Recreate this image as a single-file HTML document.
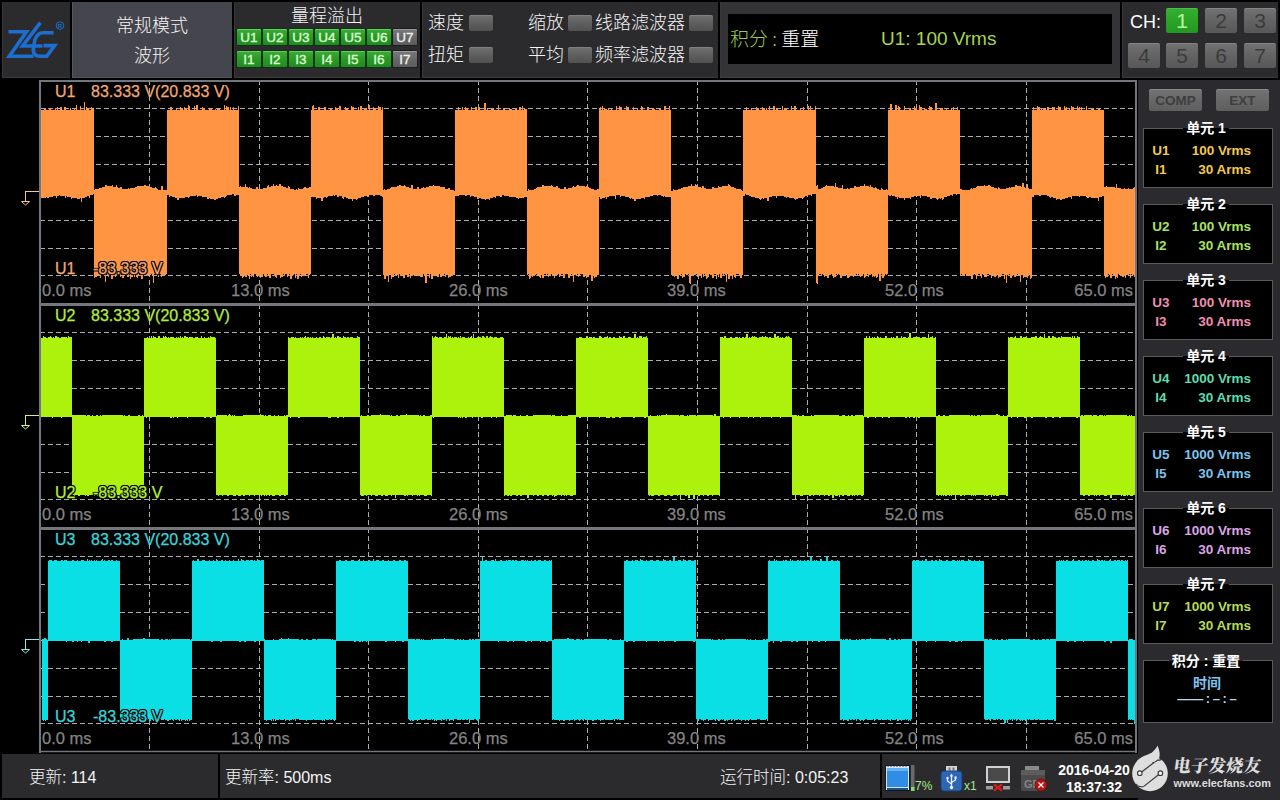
<!DOCTYPE html>
<html lang="zh"><head><meta charset="utf-8"><title>波形</title>
<style>
html,body{margin:0;padding:0;background:#000;}
body{width:1280px;height:800px;overflow:hidden;font-family:"Liberation Sans","Noto Sans CJK SC",sans-serif;color:#fff;}
#scr{position:relative;width:1280px;height:800px;background:#000;overflow:hidden;}
#scr div,#scr span{box-sizing:border-box;}
.abs{position:absolute;}
.pn{position:absolute;top:2px;height:76px;background:#2b2b2e;border-bottom:1px solid #3c3c40;box-shadow:inset 1px 0 0 #38383c;}
.cj{font-family:"Noto Sans CJK SC","Liberation Sans",sans-serif;font-weight:300;}
.t18{position:absolute;font-size:18px;line-height:24px;white-space:nowrap;color:#f4f4f4;}
.ctr{text-align:center;}
.ob{position:absolute;width:24px;height:16px;border-radius:1px;font-size:13.5px;font-weight:normal;-webkit-text-stroke:0.35px #d9ffd0;line-height:16px;padding-top:1px;text-align:center;color:#d9ffd0;background:linear-gradient(#3cab38,#2a9a27 50%,#218a21);box-shadow:inset 0 1px 0 rgba(200,255,200,.35),0 0 0 1px #0d3410;}
.ob.g{background:linear-gradient(#7a7a7a,#666 55%,#5c5c5c);color:#f0f0f0;-webkit-text-stroke-color:#f0f0f0;box-shadow:inset 0 1px 0 rgba(255,255,255,.25),0 0 0 1px #1c1c1c;}
.ind{position:absolute;width:24px;height:16px;border-radius:2px;background:linear-gradient(#707070,#5c5c5c 60%,#525252);box-shadow:inset 0 1px 0 rgba(255,255,255,.12);}
.chb{position:absolute;width:32px;height:25px;border-radius:2px;font-size:21px;line-height:25px;text-align:center;color:#3b3b3b;background:linear-gradient(#727272,#626262 55%,#585858);box-shadow:inset 0 1px 0 rgba(255,255,255,.14);}
.chb.on{background:linear-gradient(#35b030,#2aa227 55%,#239821);color:#b8ffa8;}
#plots{position:absolute;left:0;top:0;}
.pl{position:absolute;font-size:16px;line-height:20px;white-space:nowrap;-webkit-text-stroke:0.25px currentColor;}
.ol{text-shadow:-1px 0 #000,1px 0 #000,0 -1px #000,0 1px #000,-1px -1px #000,1px 1px #000,-1px 1px #000,1px -1px #000;}
.tl{position:absolute;font-size:16.5px;line-height:20px;color:#848484;white-space:nowrap;-webkit-text-stroke:0.25px #848484;}
#rp{position:absolute;left:1138px;top:80px;width:142px;height:720px;background:#2b2b2f;}
.rb{position:absolute;width:53px;height:22px;border-radius:2px;font-size:13.5px;line-height:22px;padding-top:1px;text-align:center;font-weight:bold;color:#3e3e3e;background:linear-gradient(#747474,#676767 55%,#5e5e5e);box-shadow:inset 0 1px 0 rgba(255,255,255,.16);}
.ub{position:absolute;left:5px;width:130px;height:60px;background:#000;border:1px solid #5a5a5e;}
.ut{position:absolute;left:3px;width:130px;height:16px;text-align:center;font-size:14px;line-height:16px;font-weight:bold;color:#fff;white-space:nowrap;font-family:"Liberation Sans","Noto Sans CJK SC",sans-serif;}
.ut span{background:linear-gradient(#2b2b2f 50%,#000 50%);padding:0 3px;display:inline-block;height:16px;}
.ul{position:absolute;font-size:13.5px;line-height:16px;font-weight:bold;white-space:nowrap;}
.st{position:absolute;top:754px;height:44px;background:#2b2b2e;}
.stt{position:absolute;font-size:16.5px;line-height:22px;white-space:nowrap;color:#f4f4f4;font-family:"Liberation Sans","Noto Sans CJK SC",sans-serif;font-weight:300;}
.la{font-size:16px;}

</style></head>
<body>
<div id="scr">
<!-- top bar -->
<div class="pn" style="left:2px;width:68px;">
<svg class="abs" style="left:0;top:0" width="68" height="76" viewBox="2 2 68 76">
<g fill="none" stroke="#1c6fd0" stroke-width="3.6" stroke-linejoin="miter">
<path d="M8.5,31.7 H26.5 L9.3,56.3 H33.5"/>
<path d="M40.4,22.6 L22.6,46 H42.5"/>
<path d="M53.5,32.7 H43 Q37.5,32.7 35,39.5 L33.6,46.5 Q31.8,56.3 40,56.3 H46.8 L54.6,45.6 H43.5"/>
</g>
<circle cx="60" cy="25.6" r="3.8" fill="none" stroke="#1c6fd0" stroke-width="1"/>
<text x="60" y="27.8" font-size="6" font-weight="bold" fill="#1c6fd0" text-anchor="middle" font-family="Liberation Sans,sans-serif">R</text>
</svg>
</div>
<div class="pn" style="left:72px;width:160px;background:#45454d;border-bottom-color:#52525a;box-shadow:inset 1px 0 0 #56565e;">
<div class="t18 cj ctr" style="left:0;width:160px;top:10px;">常规模式</div>
<div class="t18 cj ctr" style="left:0;width:160px;top:40px;">波形</div>
</div>
<div class="pn" style="left:234px;width:186px;">
<div class="t18 cj ctr" style="left:0;width:186px;top:0px;">量程溢出</div>
<div class="ob" style="left:3px;top:27px">U1</div><div class="ob" style="left:29px;top:27px">U2</div><div class="ob" style="left:55px;top:27px">U3</div><div class="ob" style="left:81px;top:27px">U4</div><div class="ob" style="left:107px;top:27px">U5</div><div class="ob" style="left:133px;top:27px">U6</div><div class="ob g" style="left:159px;top:27px">U7</div>
<div class="ob" style="left:3px;top:49px">I1</div><div class="ob" style="left:29px;top:49px">I2</div><div class="ob" style="left:55px;top:49px">I3</div><div class="ob" style="left:81px;top:49px">I4</div><div class="ob" style="left:107px;top:49px">I5</div><div class="ob" style="left:133px;top:49px">I6</div><div class="ob g" style="left:159px;top:49px">I7</div>
</div>
<div class="pn" style="left:422px;width:296px;">
<div class="t18 cj" style="left:6px;top:7px;">速度</div><div class="ind" style="left:47px;top:13px"></div>
<div class="t18 cj" style="left:6px;top:39px;">扭矩</div><div class="ind" style="left:47px;top:45px"></div>
<div class="t18 cj" style="left:106px;top:7px;">缩放</div><div class="ind" style="left:146px;top:13px"></div>
<div class="t18 cj" style="left:106px;top:39px;">平均</div><div class="ind" style="left:146px;top:45px"></div>
<div class="t18 cj" style="left:173px;top:7px;">线路滤波器</div><div class="ind" style="left:267px;top:13px"></div>
<div class="t18 cj" style="left:173px;top:39px;">频率滤波器</div><div class="ind" style="left:267px;top:45px"></div>
</div>
<div class="pn" style="left:720px;width:400px;background:#343437;border-bottom-color:#404044;">
<div class="abs" style="left:8px;top:12px;width:384px;height:50px;background:#000;"></div>
<div class="t18 cj" style="left:10px;top:24px;font-size:19px;color:#9ccc4e;">积分&nbsp;:&nbsp;<span style="color:#fff">重置</span></div>
<div class="t18" style="left:161px;top:25px;color:#a6d64e;font-size:19px;">U1: 100 Vrms</div>
</div>
<div class="pn" style="left:1122px;width:156px;">
<div class="t18" style="left:8px;top:8px;font-size:18px;color:#fff;">CH:</div>
<div class="chb on" style="left:44px;top:6px">1</div><div class="chb" style="left:83px;top:6px">2</div><div class="chb" style="left:122px;top:6px">3</div>
<div class="chb" style="left:6px;top:41px">4</div><div class="chb" style="left:44px;top:41px">5</div><div class="chb" style="left:83px;top:41px">6</div><div class="chb" style="left:122px;top:41px">7</div>
</div>
<svg id="plots" width="1280" height="800" viewBox="0 0 1280 800" shape-rendering="crispEdges">
<rect x="39" y="80" width="1098" height="673" fill="#000"/>
<line x1="40" x2="1135" y1="108.5" y2="108.5" stroke="#acacac" stroke-width="1" stroke-dasharray="5 3"/>
<line x1="40" x2="1135" y1="136.5" y2="136.5" stroke="#acacac" stroke-width="1" stroke-dasharray="5 3"/>
<line x1="40" x2="1135" y1="164.5" y2="164.5" stroke="#acacac" stroke-width="1" stroke-dasharray="5 3"/>
<line x1="40" x2="1135" y1="192.5" y2="192.5" stroke="#acacac" stroke-width="1" stroke-dasharray="5 3"/>
<line x1="40" x2="1135" y1="220.5" y2="220.5" stroke="#acacac" stroke-width="1" stroke-dasharray="5 3"/>
<line x1="40" x2="1135" y1="248.5" y2="248.5" stroke="#acacac" stroke-width="1" stroke-dasharray="5 3"/>
<line x1="40" x2="1135" y1="275.5" y2="275.5" stroke="#acacac" stroke-width="1" stroke-dasharray="5 3"/>
<line x1="149.5" x2="149.5" y1="82" y2="303" stroke="#acacac" stroke-width="1" stroke-dasharray="5 3" stroke-dashoffset="2"/>
<line x1="259.5" x2="259.5" y1="82" y2="303" stroke="#acacac" stroke-width="1" stroke-dasharray="5 3" stroke-dashoffset="2"/>
<line x1="368.5" x2="368.5" y1="82" y2="303" stroke="#acacac" stroke-width="1" stroke-dasharray="5 3" stroke-dashoffset="2"/>
<line x1="478.5" x2="478.5" y1="82" y2="303" stroke="#acacac" stroke-width="1" stroke-dasharray="5 3" stroke-dashoffset="2"/>
<line x1="587.5" x2="587.5" y1="82" y2="303" stroke="#acacac" stroke-width="1" stroke-dasharray="5 3" stroke-dashoffset="2"/>
<line x1="697.5" x2="697.5" y1="82" y2="303" stroke="#acacac" stroke-width="1" stroke-dasharray="5 3" stroke-dashoffset="2"/>
<line x1="807.5" x2="807.5" y1="82" y2="303" stroke="#acacac" stroke-width="1" stroke-dasharray="5 3" stroke-dashoffset="2"/>
<line x1="916.5" x2="916.5" y1="82" y2="303" stroke="#acacac" stroke-width="1" stroke-dasharray="5 3" stroke-dashoffset="2"/>
<line x1="1026.5" x2="1026.5" y1="82" y2="303" stroke="#acacac" stroke-width="1" stroke-dasharray="5 3" stroke-dashoffset="2"/>
<line x1="40" x2="1135" y1="332.5" y2="332.5" stroke="#acacac" stroke-width="1" stroke-dasharray="5 3"/>
<line x1="40" x2="1135" y1="360.5" y2="360.5" stroke="#acacac" stroke-width="1" stroke-dasharray="5 3"/>
<line x1="40" x2="1135" y1="388.5" y2="388.5" stroke="#acacac" stroke-width="1" stroke-dasharray="5 3"/>
<line x1="40" x2="1135" y1="416.5" y2="416.5" stroke="#acacac" stroke-width="1" stroke-dasharray="5 3"/>
<line x1="40" x2="1135" y1="444.5" y2="444.5" stroke="#acacac" stroke-width="1" stroke-dasharray="5 3"/>
<line x1="40" x2="1135" y1="472.5" y2="472.5" stroke="#acacac" stroke-width="1" stroke-dasharray="5 3"/>
<line x1="40" x2="1135" y1="499.5" y2="499.5" stroke="#acacac" stroke-width="1" stroke-dasharray="5 3"/>
<line x1="149.5" x2="149.5" y1="306" y2="527" stroke="#acacac" stroke-width="1" stroke-dasharray="5 3" stroke-dashoffset="2"/>
<line x1="259.5" x2="259.5" y1="306" y2="527" stroke="#acacac" stroke-width="1" stroke-dasharray="5 3" stroke-dashoffset="2"/>
<line x1="368.5" x2="368.5" y1="306" y2="527" stroke="#acacac" stroke-width="1" stroke-dasharray="5 3" stroke-dashoffset="2"/>
<line x1="478.5" x2="478.5" y1="306" y2="527" stroke="#acacac" stroke-width="1" stroke-dasharray="5 3" stroke-dashoffset="2"/>
<line x1="587.5" x2="587.5" y1="306" y2="527" stroke="#acacac" stroke-width="1" stroke-dasharray="5 3" stroke-dashoffset="2"/>
<line x1="697.5" x2="697.5" y1="306" y2="527" stroke="#acacac" stroke-width="1" stroke-dasharray="5 3" stroke-dashoffset="2"/>
<line x1="807.5" x2="807.5" y1="306" y2="527" stroke="#acacac" stroke-width="1" stroke-dasharray="5 3" stroke-dashoffset="2"/>
<line x1="916.5" x2="916.5" y1="306" y2="527" stroke="#acacac" stroke-width="1" stroke-dasharray="5 3" stroke-dashoffset="2"/>
<line x1="1026.5" x2="1026.5" y1="306" y2="527" stroke="#acacac" stroke-width="1" stroke-dasharray="5 3" stroke-dashoffset="2"/>
<line x1="40" x2="1135" y1="556.5" y2="556.5" stroke="#acacac" stroke-width="1" stroke-dasharray="5 3"/>
<line x1="40" x2="1135" y1="584.5" y2="584.5" stroke="#acacac" stroke-width="1" stroke-dasharray="5 3"/>
<line x1="40" x2="1135" y1="612.5" y2="612.5" stroke="#acacac" stroke-width="1" stroke-dasharray="5 3"/>
<line x1="40" x2="1135" y1="640.5" y2="640.5" stroke="#acacac" stroke-width="1" stroke-dasharray="5 3"/>
<line x1="40" x2="1135" y1="668.5" y2="668.5" stroke="#acacac" stroke-width="1" stroke-dasharray="5 3"/>
<line x1="40" x2="1135" y1="696.5" y2="696.5" stroke="#acacac" stroke-width="1" stroke-dasharray="5 3"/>
<line x1="40" x2="1135" y1="723.5" y2="723.5" stroke="#acacac" stroke-width="1" stroke-dasharray="5 3"/>
<line x1="149.5" x2="149.5" y1="530" y2="751" stroke="#acacac" stroke-width="1" stroke-dasharray="5 3" stroke-dashoffset="2"/>
<line x1="259.5" x2="259.5" y1="530" y2="751" stroke="#acacac" stroke-width="1" stroke-dasharray="5 3" stroke-dashoffset="2"/>
<line x1="368.5" x2="368.5" y1="530" y2="751" stroke="#acacac" stroke-width="1" stroke-dasharray="5 3" stroke-dashoffset="2"/>
<line x1="478.5" x2="478.5" y1="530" y2="751" stroke="#acacac" stroke-width="1" stroke-dasharray="5 3" stroke-dashoffset="2"/>
<line x1="587.5" x2="587.5" y1="530" y2="751" stroke="#acacac" stroke-width="1" stroke-dasharray="5 3" stroke-dashoffset="2"/>
<line x1="697.5" x2="697.5" y1="530" y2="751" stroke="#acacac" stroke-width="1" stroke-dasharray="5 3" stroke-dashoffset="2"/>
<line x1="807.5" x2="807.5" y1="530" y2="751" stroke="#acacac" stroke-width="1" stroke-dasharray="5 3" stroke-dashoffset="2"/>
<line x1="916.5" x2="916.5" y1="530" y2="751" stroke="#acacac" stroke-width="1" stroke-dasharray="5 3" stroke-dashoffset="2"/>
<line x1="1026.5" x2="1026.5" y1="530" y2="751" stroke="#acacac" stroke-width="1" stroke-dasharray="5 3" stroke-dashoffset="2"/>
<path d="M41,109.5 44,109.5 44,108 46,108 46,110 47,110 47,109.5 49,109.5 49,107.5 50,107.5 50,108 51,108 51,110 53,110 53,109.5 55,109.5 55,108 56,108 56,109.5 57,109.5 57,106.5 58,106.5 58,109.5 60,109.5 60,107 62,107 62,109.5 63,109.5 63,110 64,110 64,106.5 66,106.5 66,110 67,110 67,109.5 70,109.5 70,108 71,108 71,109.5 74,109.5 74,107.5 75,107.5 75,110 76,110 76,105 77,105 77,109.5 80,109.5 80,106 81,106 81,110 84,110 84,101.5 85,101.5 85,110 86,110 86,107 87,107 87,108 88,108 88,107.5 89,107.5 89,109.5 90,109.5 90,110 91,110 91,107 92,107 92,107.5 94,107.5 94,194 93,194 93,194.5 92,194.5 92,195 90,195 90,198 89,198 89,195.5 88,195.5 88,196 87,196 87,196.5 86,196.5 86,197 85,197 85,197.5 84,197.5 84,198 82,198 82,201.5 81,201.5 81,198 80,198 80,198.5 77,198.5 77,198 74,198 74,197.5 72,197.5 72,199 71,199 71,197 69,197 69,196.5 67,196.5 67,196 66,196 66,197.5 65,197.5 65,195.5 60,195.5 60,195 59,195 59,195.5 57,195.5 57,197.5 56,197.5 56,195.5 55,195.5 55,196 53,196 53,196.5 51,196.5 51,197 49,197 49,197.5 48,197.5 48,198 47,198 47,197 46,197 46,197.5 43,197.5 43,198 42,198 42,197.5 41,197.5ZM94,189.5 95,189.5 95,188.5 96,188.5 96,189 98,189 98,188.5 99,188.5 99,188 101,188 101,187.5 102,187.5 102,187 104,187 104,186.5 105,186.5 105,184.5 107,184.5 107,186 109,186 109,185.5 110,185.5 110,186 112,186 112,185 113,185 113,186.5 115,186.5 115,187 116,187 116,185 117,185 117,187 118,187 118,187.5 119,187.5 119,188 120,188 120,186.5 121,186.5 121,187 122,187 122,188.5 127,188.5 127,189 128,189 128,187.5 129,187.5 129,188.5 130,188.5 130,188 133,188 133,187.5 135,187.5 135,187 136,187 136,186.5 137,186.5 137,186 138,186 138,185.5 139,185.5 139,186 141,186 141,185.5 144,185.5 144,184.5 145,184.5 145,185 146,185 146,186 149,186 149,186.5 150,186.5 150,187 152,187 152,187.5 154,187.5 154,188 155,188 155,187 156,187 156,187.5 157,187.5 157,189 158,189 158,189.5 160,189.5 160,190 161,190 161,186 163,186 163,190 167,190 167,274 166,274 166,274.5 163,274.5 163,276 162,276 162,276.5 161,276.5 161,274 159,274 159,276.5 158,276.5 158,274.5 156,274.5 156,274 154,274 154,283 153,283 153,274.5 152,274.5 152,274 151,274 151,274.5 150,274.5 150,274 149,274 149,275.5 148,275.5 148,276 146,276 146,274.5 144,274.5 144,274 143,274 143,278.5 142,278.5 142,279 141,279 141,274.5 140,274.5 140,274 139,274 139,274.5 138,274.5 138,277.5 137,277.5 137,277 136,277 136,274 135,274 135,277 134,277 134,274 133,274 133,277 131,277 131,278.5 130,278.5 130,274 129,274 129,276.5 127,276.5 127,274.5 124,274.5 124,277.5 122,277.5 122,274 121,274 121,277 120,277 120,274.5 119,274.5 119,274 118,274 118,274.5 116,274.5 116,277 115,277 115,274 113,274 113,278.5 111,278.5 111,274.5 109,274.5 109,276.5 108,276.5 108,274.5 107,274.5 107,274 106,274 106,281.5 105,281.5 105,274 104,274 104,274.5 101,274.5 101,278 100,278 100,274.5 97,274.5 97,276.5 95,276.5 95,277.5 94,277.5ZM167,110 170,110 170,107 171,107 171,106.5 172,106.5 172,109.5 173,109.5 173,110 174,110 174,109.5 175,109.5 175,110 176,110 176,108 177,108 177,110 178,110 178,109.5 179,109.5 179,110 180,110 180,106.5 181,106.5 181,107.5 183,107.5 183,110 184,110 184,107 185,107 185,107.5 186,107.5 186,108 187,108 187,110 188,110 188,105 189,105 189,105.5 190,105.5 190,110 191,110 191,109.5 192,109.5 192,110 194,110 194,105.5 195,105.5 195,109.5 196,109.5 196,105 198,105 198,109.5 199,109.5 199,110 200,110 200,109.5 201,109.5 201,110 202,110 202,107 203,107 203,108 205,108 205,109.5 206,109.5 206,110 207,110 207,109.5 208,109.5 208,110 209,110 209,107.5 210,107.5 210,108 212,108 212,109.5 213,109.5 213,110 215,110 215,108.5 216,108.5 216,109.5 217,109.5 217,108 218,108 218,108.5 219,108.5 219,108 220,108 220,109.5 222,109.5 222,110 224,110 224,105 225,105 225,110 226,110 226,105.5 227,105.5 227,106.5 228,106.5 228,107 229,107 229,110 230,110 230,107 231,107 231,109.5 232,109.5 232,110 233,110 233,107 234,107 234,110 235,110 235,109.5 236,109.5 236,110 238,110 238,105.5 239,105.5 239,194.5 236,194.5 236,195.5 234,195.5 234,194 232,194 232,194.5 228,194.5 228,195 227,195 227,195.5 226,195.5 226,197 225,197 225,197.5 224,197.5 224,196.5 223,196.5 223,197 221,197 221,197.5 220,197.5 220,198 218,198 218,198.5 216,198.5 216,199.5 215,199.5 215,200 214,200 214,199 213,199 213,198.5 210,198.5 210,198 209,198 209,199 208,199 208,198.5 207,198.5 207,197 205,197 205,196.5 202,196.5 202,196 201,196 201,195.5 198,195.5 198,197 197,197 197,195 196,195 196,195.5 192,195.5 192,196 190,196 190,196.5 189,196.5 189,197.5 188,197.5 188,196.5 187,196.5 187,197 185,197 185,197.5 182,197.5 182,198 179,198 179,199.5 177,199.5 177,197.5 175,197.5 175,197 173,197 173,196.5 172,196.5 172,196 170,196 170,197 169,197 169,195 168,195 168,194.5 167,194.5ZM239,187 240,187 240,186 241,186 241,187 242,187 242,186.5 243,186.5 243,187 244,187 244,186.5 245,186.5 245,184 246,184 246,187 248,187 248,187.5 249,187.5 249,187 250,187 250,188 252,188 252,188.5 254,188.5 254,189 255,189 255,188.5 256,188.5 256,187 258,187 258,189 261,189 261,188.5 263,188.5 263,188 266,188 266,187.5 267,187.5 267,185.5 268,185.5 268,185 269,185 269,186.5 271,186.5 271,186 273,186 273,184 274,184 274,185.5 276,185.5 276,185 277,185 277,185.5 279,185.5 279,184 281,184 281,185.5 282,185.5 282,186 283,186 283,186.5 285,186.5 285,187 286,187 286,187.5 288,187.5 288,186 289,186 289,186.5 290,186.5 290,188.5 292,188.5 292,189 294,189 294,189.5 296,189.5 296,189 297,189 297,189.5 298,189.5 298,188 299,188 299,189 302,189 302,188.5 303,188.5 303,188 304,188 304,187 306,187 306,187.5 309,187.5 309,187 311,187 311,274 310,274 310,274.5 309,274.5 309,278 308,278 308,274 306,274 306,274.5 304,274.5 304,276 302,276 302,277 301,277 301,274 300,274 300,274.5 299,274.5 299,278.5 297,278.5 297,274 296,274 296,277.5 295,277.5 295,274 294,274 294,274.5 292,274.5 292,278.5 291,278.5 291,279 290,279 290,274 289,274 289,274.5 288,274.5 288,277 287,277 287,274 285,274 285,274.5 284,274.5 284,274 283,274 283,276.5 281,276.5 281,277.5 280,277.5 280,274.5 277,274.5 277,277.5 276,277.5 276,277 275,277 275,274.5 274,274.5 274,274 271,274 271,277.5 269,277.5 269,274.5 268,274.5 268,274 267,274 267,276.5 265,276.5 265,274.5 264,274.5 264,274 263,274 263,276.5 261,276.5 261,277.5 260,277.5 260,274 259,274 259,274.5 258,274.5 258,276.5 257,276.5 257,274.5 256,274.5 256,274 254,274 254,276.5 253,276.5 253,276 252,276 252,277 251,277 251,274 250,274 250,278.5 249,278.5 249,274.5 247,274.5 247,277 246,277 246,276.5 245,276.5 245,274.5 244,274.5 244,277 243,277 243,277.5 242,277.5 242,274.5 240,274.5 240,274 239,274ZM311,110 312,110 312,105.5 313,105.5 313,105 314,105 314,110 315,110 315,109.5 316,109.5 316,110 318,110 318,107 320,107 320,109.5 321,109.5 321,110 322,110 322,109.5 324,109.5 324,106.5 326,106.5 326,109.5 327,109.5 327,110 328,110 328,109.5 330,109.5 330,108 332,108 332,109.5 333,109.5 333,110 335,110 335,106.5 336,106.5 336,107.5 338,107.5 338,109.5 339,109.5 339,105.5 341,105.5 341,109.5 343,109.5 343,110 344,110 344,109.5 345,109.5 345,107 346,107 346,107.5 348,107.5 348,110 350,110 350,109.5 351,109.5 351,106 352,106 352,106.5 353,106.5 353,107 354,107 354,109.5 355,109.5 355,110 357,110 357,109.5 358,109.5 358,106.5 359,106.5 359,109.5 360,109.5 360,106 362,106 362,109.5 364,109.5 364,107.5 365,107.5 365,108 367,108 367,109.5 369,109.5 369,105 370,105 370,109.5 371,109.5 371,110 373,110 373,107 374,107 374,107.5 375,107.5 375,108 376,108 376,110 378,110 378,106 379,106 379,107 381,107 381,110 382,110 382,106.5 383,106.5 383,197 382,197 382,195.5 380,195.5 380,195 377,195 377,194.5 376,194.5 376,195 375,195 375,195.5 374,195.5 374,196 373,196 373,194.5 371,194.5 371,195 370,195 370,194.5 369,194.5 369,196.5 368,196.5 368,197 367,197 367,195.5 366,195.5 366,196 364,196 364,196.5 363,196.5 363,197 361,197 361,197.5 359,197.5 359,198 358,198 358,199 357,199 357,199.5 356,199.5 356,198.5 354,198.5 354,199 353,199 353,200.5 352,200.5 352,198.5 348,198.5 348,198 346,198 346,197 344,197 344,198.5 343,198.5 343,197.5 342,197.5 342,196 339,196 339,197 338,197 338,196.5 337,196.5 337,195 335,195 335,195.5 334,195.5 334,195 333,195 333,195.5 329,195.5 329,196 328,196 328,197 327,197 327,197.5 326,197.5 326,196.5 325,196.5 325,197 324,197 324,197.5 323,197.5 323,200.5 321,200.5 321,197.5 317,197.5 317,198.5 316,198.5 316,197 313,197 313,196.5 312,196.5 312,197 311,197ZM383,190 384,190 384,188.5 385,188.5 385,190 386,190 386,189.5 387,189.5 387,189 389,189 389,188.5 390,188.5 390,188 391,188 391,187 392,187 392,186.5 393,186.5 393,187 395,187 395,186.5 397,186.5 397,186 399,186 399,184.5 401,184.5 401,186 404,186 404,184.5 405,184.5 405,186 406,186 406,186.5 408,186.5 408,187 409,187 409,187.5 411,187.5 411,184.5 413,184.5 413,188.5 417,188.5 417,187 419,187 419,188.5 421,188.5 421,188 422,188 422,187.5 423,187.5 423,187 424,187 424,187.5 426,187.5 426,187 428,187 428,186.5 429,186.5 429,186 432,186 432,185.5 433,185.5 433,184.5 434,184.5 434,185.5 436,185.5 436,186 440,186 440,186.5 441,186.5 441,187 443,187 443,186.5 444,186.5 444,187 445,187 445,188.5 447,188.5 447,189 448,189 448,187.5 450,187.5 450,190 454,190 454,190.5 455,190.5 455,274.5 451,274.5 451,277 450,277 450,276.5 449,276.5 449,278 448,278 448,274.5 446,274.5 446,276.5 445,276.5 445,274 444,274 444,276 443,276 443,274.5 442,274.5 442,277 440,277 440,274 439,274 439,276.5 438,276.5 438,277 437,277 437,274.5 433,274.5 433,278.5 431,278.5 431,274 430,274 430,278 429,278 429,274 427,274 427,283 426,283 426,282.5 425,282.5 425,274.5 424,274.5 424,274 423,274 423,276.5 421,276.5 421,277 420,277 420,274.5 417,274.5 417,275.5 415,275.5 415,276 414,276 414,274.5 411,274.5 411,277.5 410,277.5 410,274 409,274 409,276.5 407,276.5 407,274.5 405,274.5 405,277.5 403,277.5 403,274.5 400,274.5 400,274 399,274 399,277.5 398,277.5 398,274.5 395,274.5 395,274 394,274 394,277 392,277 392,278.5 391,278.5 391,274.5 389,274.5 389,282 388,282 388,274.5 386,274.5 386,278.5 384,278.5 384,274.5 383,274.5ZM455,109.5 457,109.5 457,110 458,110 458,107 459,107 459,109.5 461,109.5 461,110 462,110 462,107 463,107 463,109.5 465,109.5 465,107 466,107 466,108 468,108 468,110 469,110 469,109.5 470,109.5 470,110 471,110 471,107 472,107 472,110 474,110 474,109.5 475,109.5 475,107 477,107 477,109.5 478,109.5 478,106.5 480,106.5 480,109.5 482,109.5 482,110 484,110 484,103 485,103 485,102.5 486,102.5 486,110 487,110 487,108 488,108 488,110 489,110 489,109.5 490,109.5 490,110 491,110 491,108 492,108 492,108.5 493,108.5 493,108 494,108 494,109.5 498,109.5 498,105 499,105 499,109.5 501,109.5 501,110 503,110 503,108 505,108 505,110 507,110 507,109.5 509,109.5 509,107.5 510,107.5 510,108.5 512,108.5 512,109.5 514,109.5 514,110 515,110 515,107.5 517,107.5 517,110 518,110 518,109.5 519,109.5 519,106.5 521,106.5 521,110 522,110 522,105.5 523,105.5 523,109.5 524,109.5 524,108 525,108 525,108.5 527,108.5 527,196.5 525,196.5 525,197 524,197 524,197.5 520,197.5 520,198 519,198 519,198.5 518,198.5 518,197.5 516,197.5 516,197 513,197 513,196.5 511,196.5 511,197 510,197 510,196.5 509,196.5 509,195.5 504,195.5 504,195 502,195 502,196.5 500,196.5 500,195.5 498,195.5 498,196 496,196 496,198 495,198 495,197 493,197 493,197.5 491,197.5 491,198 490,198 490,199.5 489,199.5 489,198.5 486,198.5 486,200 485,200 485,198.5 481,198.5 481,198 479,198 479,199 478,199 478,198.5 477,198.5 477,197 476,197 476,196.5 474,196.5 474,196 472,196 472,195.5 471,195.5 471,197 470,197 470,195 468,195 468,194.5 467,194.5 467,196 465,196 465,194.5 461,194.5 461,195 459,195 459,196 455,196ZM527,190.5 528,190.5 528,188.5 529,188.5 529,190 532,190 532,189.5 534,189.5 534,188.5 536,188.5 536,188 537,188 537,187 538,187 538,186.5 539,186.5 539,187 540,187 540,186.5 542,186.5 542,185 544,185 544,186 545,186 545,185.5 549,185.5 549,186 551,186 551,185 552,185 552,186 553,186 553,186.5 554,186.5 554,187 556,187 556,186 558,186 558,188 560,188 560,188.5 564,188.5 564,186.5 566,186.5 566,188.5 568,188.5 568,188 569,188 569,187.5 572,187.5 572,187 573,187 573,185.5 574,185.5 574,187 575,187 575,186.5 576,186.5 576,186 577,186 577,184.5 579,184.5 579,186 581,186 581,185.5 582,185.5 582,186 583,186 583,185.5 584,185.5 584,186 585,186 585,186.5 586,186.5 586,185.5 587,185.5 587,186 588,186 588,187 589,187 589,187.5 590,187.5 590,188 591,188 591,188.5 593,188.5 593,189 594,189 594,189.5 596,189.5 596,190 597,190 597,189 599,189 599,274.5 597,274.5 597,276.5 595,276.5 595,278 594,278 594,274.5 593,274.5 593,280.5 591,280.5 591,274.5 589,274.5 589,276.5 587,276.5 587,278 586,278 586,274.5 585,274.5 585,277 583,277 583,274 580,274 580,276 579,276 579,276.5 578,276.5 578,274 577,274 577,274.5 574,274.5 574,282 573,282 573,274.5 572,274.5 572,274 571,274 571,274.5 570,274.5 570,277.5 569,277.5 569,278 568,278 568,274 565,274 565,278 563,278 563,274 561,274 561,276 560,276 560,276.5 559,276.5 559,274 558,274 558,274.5 555,274.5 555,278 554,278 554,274.5 552,274.5 552,274 551,274 551,275.5 550,275.5 550,276 549,276 549,276.5 548,276.5 548,274 547,274 547,274.5 546,274.5 546,274 544,274 544,277.5 542,277.5 542,274.5 541,274.5 541,277.5 540,277.5 540,277 539,277 539,274.5 537,274.5 537,274 536,274 536,274.5 535,274.5 535,276 533,276 533,277 532,277 532,274.5 531,274.5 531,278 530,278 530,278.5 529,278.5 529,274 528,274 528,274.5 527,274.5ZM599,107.5 600,107.5 600,107 601,107 601,110 602,110 602,105.5 603,105.5 603,109.5 604,109.5 604,108 605,108 605,108.5 607,108.5 607,110 608,110 608,108 609,108 609,109.5 610,109.5 610,110 611,110 611,107.5 612,107.5 612,109.5 613,109.5 613,110 615,110 615,109.5 616,109.5 616,106 617,106 617,109.5 619,109.5 619,106 620,106 620,107 622,107 622,110 623,110 623,109.5 625,109.5 625,110 626,110 626,106 627,106 627,107 629,107 629,110 633,110 633,106.5 634,106.5 634,109.5 636,109.5 636,110 637,110 637,108 638,108 638,109.5 639,109.5 639,110 640,110 640,109.5 641,109.5 641,106 642,106 642,106.5 643,106.5 643,110 644,110 644,109.5 647,109.5 647,106.5 649,106.5 649,110 650,110 650,109.5 652,109.5 652,107.5 653,107.5 653,108 654,108 654,108.5 655,108.5 655,109.5 658,109.5 658,110 659,110 659,107.5 660,107.5 660,108 661,108 661,109.5 664,109.5 664,106 666,106 666,109.5 668,109.5 668,110 669,110 669,106 670,106 670,109.5 671,109.5 671,197 669,197 669,196.5 665,196.5 665,195.5 664,195.5 664,197 663,197 663,195.5 661,195.5 661,195 658,195 658,195.5 657,195.5 657,195 653,195 653,195.5 650,195.5 650,196.5 649,196.5 649,197 648,197 648,196.5 646,196.5 646,197 645,197 645,198.5 644,198.5 644,197.5 643,197.5 643,198 641,198 641,198.5 639,198.5 639,199 637,199 637,198.5 636,198.5 636,200.5 634,200.5 634,198.5 632,198.5 632,198 631,198 631,199 630,199 630,197.5 629,197.5 629,197 628,197 628,196.5 626,196.5 626,197 625,197 625,196 624,196 624,195.5 622,195.5 622,196 621,196 621,196.5 620,196.5 620,195 616,195 616,199 615,199 615,195.5 612,195.5 612,196 609,196 609,196.5 607,196.5 607,199 606,199 606,197 605,197 605,197.5 602,197.5 602,198.5 600,198.5 600,197 599,197ZM671,190.5 673,190.5 673,189 674,189 674,190 676,190 676,189.5 678,189.5 678,189 680,189 680,188.5 681,188.5 681,188 682,188 682,187.5 683,187.5 683,186.5 684,186.5 684,187 685,187 685,186.5 688,186.5 688,186 691,186 691,184 692,184 692,185.5 695,185.5 695,184 696,184 696,184.5 697,184.5 697,186 698,186 698,186.5 699,186.5 699,187 701,187 701,187.5 702,187.5 702,185.5 703,185.5 703,186 704,186 704,188 706,188 706,188.5 712,188.5 712,186.5 714,186.5 714,188 715,188 715,187.5 718,187.5 718,185.5 719,185.5 719,186.5 722,186.5 722,186 726,186 726,185.5 728,185.5 728,184 729,184 729,184.5 730,184.5 730,186 731,186 731,186.5 732,186.5 732,187 734,187 734,187.5 735,187.5 735,188 736,188 736,188.5 738,188.5 738,189 739,189 739,188.5 741,188.5 741,190 742,190 742,190.5 743,190.5 743,274.5 742,274.5 742,277.5 740,277.5 740,274.5 739,274.5 739,274 736,274 736,277.5 735,277.5 735,277 734,277 734,274.5 733,274.5 733,279 732,279 732,274.5 730,274.5 730,278.5 728,278.5 728,274 727,274 727,282 726,282 726,274.5 725,274.5 725,274 724,274 724,274.5 723,274.5 723,274 722,274 722,277.5 720,277.5 720,274 719,274 719,277 718,277 718,274.5 717,274.5 717,278.5 716,278.5 716,274 714,274 714,278 712,278 712,274.5 710,274.5 710,274 709,274 709,277 708,277 708,277.5 707,277.5 707,278.5 706,278.5 706,274.5 705,274.5 705,274 704,274 704,276.5 703,276.5 703,274 702,274 702,278 701,278 701,274.5 699,274.5 699,279 698,279 698,274 696,274 696,274.5 694,274.5 694,276 693,276 693,274.5 691,274.5 691,283.5 690,283.5 690,283 689,283 689,274 688,274 688,274.5 686,274.5 686,274 685,274 685,276.5 684,276.5 684,277 683,277 683,277.5 682,277.5 682,274 681,274 681,274.5 679,274.5 679,279 677,279 677,274.5 675,274.5 675,277 674,277 674,274.5 671,274.5ZM743,109.5 744,109.5 744,110 745,110 745,109.5 746,109.5 746,107 747,107 747,109.5 750,109.5 750,110 751,110 751,107.5 752,107.5 752,110 753,110 753,109.5 755,109.5 755,110 756,110 756,106.5 757,106.5 757,107.5 759,107.5 759,109.5 761,109.5 761,110 762,110 762,106.5 763,106.5 763,108 764,108 764,107.5 765,107.5 765,109.5 766,109.5 766,107.5 767,107.5 767,109.5 769,109.5 769,106 770,106 770,109.5 772,109.5 772,110 773,110 773,106 775,106 775,110 776,110 776,108 778,108 778,109.5 782,109.5 782,105.5 783,105.5 783,110 784,110 784,108 785,108 785,108.5 787,108.5 787,109.5 788,109.5 788,110 789,110 789,109.5 791,109.5 791,105.5 792,105.5 792,109.5 794,109.5 794,105.5 796,105.5 796,110 798,110 798,109.5 800,109.5 800,108 801,108 801,109.5 803,109.5 803,106.5 804,106.5 804,109.5 805,109.5 805,110 807,110 807,109.5 808,109.5 808,106 809,106 809,110 810,110 810,105.5 811,105.5 811,110 813,110 813,109.5 815,109.5 815,105.5 816,105.5 816,193.5 815,193.5 815,194 812,194 812,195.5 811,195.5 811,194.5 810,194.5 810,195 808,195 808,195.5 807,195.5 807,196 805,196 805,196.5 804,196.5 804,198 803,198 803,198.5 802,198.5 802,197.5 801,197.5 801,198 798,198 798,198.5 796,198.5 796,200 795,200 795,198.5 794,198.5 794,198 791,198 791,197.5 789,197.5 789,197 787,197 787,197.5 786,197.5 786,196.5 784,196.5 784,196 783,196 783,195.5 777,195.5 777,197.5 776,197.5 776,195.5 774,195.5 774,196 772,196 772,196.5 771,196.5 771,197 769,197 769,200.5 768,200.5 768,201 767,201 767,198 764,198 764,198.5 763,198.5 763,198 762,198 762,198.5 761,198.5 761,199.5 760,199.5 760,199 759,199 759,198 757,198 757,197.5 755,197.5 755,197 754,197 754,196.5 753,196.5 753,197 752,197 752,196.5 751,196.5 751,195.5 749,195.5 749,195 748,195 748,194.5 746,194.5 746,194 745,194 745,195.5 743,195.5ZM816,185.5 817,185.5 817,185 818,185 818,189 819,189 819,188.5 821,188.5 821,187.5 823,187.5 823,187 824,187 824,186.5 825,186.5 825,185.5 826,185.5 826,185 827,185 827,186 834,186 834,186.5 835,186.5 835,183 836,183 836,187 838,187 838,187.5 840,187.5 840,188 842,188 842,184.5 843,184.5 843,188.5 847,188.5 847,187.5 848,187.5 848,188.5 850,188.5 850,188 853,188 853,187.5 854,187.5 854,185.5 856,185.5 856,186.5 860,186.5 860,186 861,186 861,185.5 864,185.5 864,184 865,184 865,185.5 867,185.5 867,186 869,186 869,186.5 870,186.5 870,185 871,185 871,187 873,187 873,187.5 874,187.5 874,188 875,188 875,187 876,187 876,187.5 877,187.5 877,188.5 878,188.5 878,189 879,189 879,189.5 881,189.5 881,188 882,188 882,188.5 883,188.5 883,190 886,190 886,189 887,189 887,190 888,190 888,274 887,274 887,274.5 886,274.5 886,274 885,274 885,274.5 884,274.5 884,277.5 882,277.5 882,274 881,274 881,281 880,281 880,280.5 879,280.5 879,274 878,274 878,277 877,277 877,277.5 876,277.5 876,274.5 875,274.5 875,276.5 874,276.5 874,276 873,276 873,277 872,277 872,274 871,274 871,274.5 869,274.5 869,276.5 868,276.5 868,274 867,274 867,274.5 866,274.5 866,277 865,277 865,277.5 864,277.5 864,274 863,274 863,276 861,276 861,277 860,277 860,274.5 859,274.5 859,274 858,274 858,274.5 857,274.5 857,274 856,274 856,275.5 855,275.5 855,276 854,276 854,276.5 853,276.5 853,274.5 850,274.5 850,277 849,277 849,277.5 848,277.5 848,278 847,278 847,274.5 846,274.5 846,276 844,276 844,274.5 842,274.5 842,277.5 840,277.5 840,274.5 839,274.5 839,274 838,274 838,274.5 837,274.5 837,274 836,274 836,277 834,277 834,278 833,278 833,274.5 832,274.5 832,274 831,274 831,274.5 829,274.5 829,277.5 828,277.5 828,278 827,278 827,274.5 826,274.5 826,276 825,276 825,276.5 824,276.5 824,274.5 823,274.5 823,274 822,274 822,275.5 821,275.5 821,274 819,274 819,274.5 818,274.5 818,283.5 817,283.5 817,283 816,283ZM888,110 889,110 889,109.5 890,109.5 890,103.5 892,103.5 892,109.5 893,109.5 893,110 895,110 895,105 897,105 897,110 898,110 898,106 899,106 899,106.5 900,106.5 900,109.5 901,109.5 901,110 904,110 904,106 905,106 905,109.5 906,109.5 906,110 907,110 907,109.5 909,109.5 909,107.5 911,107.5 911,109.5 912,109.5 912,110 913,110 913,109.5 914,109.5 914,105.5 915,105.5 915,107.5 916,107.5 916,107 917,107 917,110 918,110 918,109.5 919,109.5 919,105 920,105 920,106.5 922,106.5 922,110 924,110 924,108 925,108 925,108.5 926,108.5 926,109 927,109 927,109.5 929,109.5 929,106 930,106 930,107 932,107 932,109.5 935,109.5 935,103 937,103 937,109.5 940,109.5 940,107.5 941,107.5 941,108 943,108 943,110 944,110 944,109.5 945,109.5 945,110 946,110 946,108 947,108 947,110 949,110 949,109.5 950,109.5 950,110 951,110 951,108 952,108 952,109.5 953,109.5 953,106.5 954,106.5 954,110 956,110 956,109.5 957,109.5 957,107 958,107 958,109.5 959,109.5 959,110 960,110 960,194 957,194 957,195 956,195 956,194 953,194 953,196 952,196 952,195 950,195 950,195.5 949,195.5 949,196 947,196 947,196.5 946,196.5 946,197 944,197 944,199 943,199 943,199.5 942,199.5 942,198 941,198 941,198.5 940,198.5 940,198 939,198 939,198.5 938,198.5 938,200 937,200 937,198.5 936,198.5 936,198 932,198 932,198.5 930,198.5 930,197 928,197 928,196.5 927,196.5 927,196 924,196 924,195.5 922,195.5 922,195 921,195 921,197.5 920,197.5 920,195.5 916,195.5 916,196 914,196 914,196.5 912,196.5 912,197 911,197 911,198.5 910,198.5 910,197.5 909,197.5 909,198 905,198 905,200 904,200 904,198 900,198 900,197.5 899,197.5 899,197 898,197 898,199 897,199 897,197 896,197 896,196.5 895,196.5 895,196 893,196 893,195.5 892,195.5 892,195 891,195 891,196 889,196 889,194.5 888,194.5ZM960,188.5 962,188.5 962,190 967,190 967,189.5 970,189.5 970,189 971,189 971,188 972,188 972,188.5 973,188.5 973,188 974,188 974,187.5 976,187.5 976,187 977,187 977,185.5 979,185.5 979,186 981,186 981,185.5 984,185.5 984,185 985,185 985,185.5 988,185.5 988,185 990,185 990,186 991,186 991,186.5 993,186.5 993,187 994,187 994,187.5 995,187.5 995,188 997,188 997,188.5 998,188.5 998,187 999,187 999,187.5 1000,187.5 1000,188.5 1003,188.5 1003,189 1004,189 1004,188.5 1006,188.5 1006,188 1009,188 1009,186.5 1010,186.5 1010,187.5 1011,187.5 1011,187 1014,187 1014,186.5 1015,186.5 1015,184.5 1017,184.5 1017,186 1021,186 1021,186.5 1022,186.5 1022,183 1024,183 1024,187 1025,187 1025,187.5 1027,187.5 1027,184 1028,184 1028,188 1029,188 1029,188.5 1030,188.5 1030,189 1031,189 1031,188.5 1032,188.5 1032,278 1031,278 1031,278.5 1030,278.5 1030,274.5 1028,274.5 1028,278 1027,278 1027,274 1026,274 1026,276.5 1024,276.5 1024,277.5 1023,277.5 1023,274.5 1021,274.5 1021,281.5 1020,281.5 1020,274.5 1018,274.5 1018,274 1017,274 1017,274.5 1016,274.5 1016,276.5 1015,276.5 1015,277 1014,277 1014,274.5 1012,274.5 1012,277.5 1011,277.5 1011,278 1010,278 1010,274 1009,274 1009,274.5 1007,274.5 1007,283 1006,283 1006,274.5 1005,274.5 1005,278.5 1004,278.5 1004,274 1002,274 1002,274.5 1001,274.5 1001,276.5 999,276.5 999,277.5 998,277.5 998,274.5 996,274.5 996,276.5 994,276.5 994,274.5 992,274.5 992,278 991,278 991,274.5 989,274.5 989,274 987,274 987,276.5 985,276.5 985,277 984,277 984,274.5 983,274.5 983,274 982,274 982,278 981,278 981,274.5 980,274.5 980,274 978,274 978,274.5 977,274.5 977,278.5 976,278.5 976,274.5 975,274.5 975,274 974,274 974,274.5 973,274.5 973,279 971,279 971,274.5 969,274.5 969,275.5 967,275.5 967,276 966,276 966,274 965,274 965,275.5 963,275.5 963,276 962,276 962,274 961,274 961,274.5 960,274.5ZM1032,110 1033,110 1033,107 1034,107 1034,109.5 1035,109.5 1035,110 1036,110 1036,109.5 1037,109.5 1037,105.5 1038,105.5 1038,106.5 1040,106.5 1040,110 1041,110 1041,108 1042,108 1042,110 1043,110 1043,107.5 1044,107.5 1044,108 1046,108 1046,109.5 1047,109.5 1047,106.5 1049,106.5 1049,109.5 1052,109.5 1052,106.5 1053,106.5 1053,107 1055,107 1055,109.5 1058,109.5 1058,106 1059,106 1059,107 1061,107 1061,110 1063,110 1063,109.5 1064,109.5 1064,106 1065,106 1065,107.5 1066,107.5 1066,107 1067,107 1067,109.5 1068,109.5 1068,110 1069,110 1069,107.5 1070,107.5 1070,109.5 1071,109.5 1071,105.5 1072,105.5 1072,107 1073,107 1073,106.5 1074,106.5 1074,110 1075,110 1075,109.5 1077,109.5 1077,106 1078,106 1078,107.5 1079,107.5 1079,107 1080,107 1080,109.5 1081,109.5 1081,107 1082,107 1082,109.5 1083,109.5 1083,110 1084,110 1084,109.5 1085,109.5 1085,110 1086,110 1086,105.5 1087,105.5 1087,109.5 1088,109.5 1088,110 1089,110 1089,109.5 1091,109.5 1091,108 1094,108 1094,110 1096,110 1096,109.5 1098,109.5 1098,108 1100,108 1100,110 1101,110 1101,109.5 1104,109.5 1104,196 1102,196 1102,196.5 1101,196.5 1101,197 1099,197 1099,200.5 1098,200.5 1098,197.5 1091,197.5 1091,197 1089,197 1089,198 1088,198 1088,197.5 1087,197.5 1087,196.5 1086,196.5 1086,196 1083,196 1083,195.5 1080,195.5 1080,196.5 1079,196.5 1079,196 1078,196 1078,195.5 1074,195.5 1074,196 1072,196 1072,198.5 1071,198.5 1071,196.5 1070,196.5 1070,197 1068,197 1068,197.5 1067,197.5 1067,198 1065,198 1065,198.5 1062,198.5 1062,199.5 1060,199.5 1060,198.5 1057,198.5 1057,200 1056,200 1056,198 1055,198 1055,197.5 1053,197.5 1053,197 1051,197 1051,197.5 1050,197.5 1050,196.5 1049,196.5 1049,196 1048,196 1048,195.5 1047,195.5 1047,195 1045,195 1045,194.5 1041,194.5 1041,196 1039,196 1039,194.5 1036,194.5 1036,195 1034,195 1034,196.5 1033,196.5 1033,197 1032,197ZM1104,187 1106,187 1106,186 1107,186 1107,186.5 1114,186.5 1114,187 1115,187 1115,187.5 1116,187.5 1116,183.5 1117,183.5 1117,187.5 1119,187.5 1119,188 1121,188 1121,188.5 1124,188.5 1124,188 1125,188 1125,189 1127,189 1127,188.5 1128,188.5 1128,187.5 1129,187.5 1129,188.5 1133,188.5 1133,188 1134,188 1134,186.5 1135,186.5 1135,277 1134,277 1134,274.5 1132,274.5 1132,274 1131,274 1131,277.5 1130,277.5 1130,274 1129,274 1129,274.5 1126,274.5 1126,278 1125,278 1125,274.5 1124,274.5 1124,276.5 1122,276.5 1122,274.5 1119,274.5 1119,274 1118,274 1118,277.5 1117,277.5 1117,277 1116,277 1116,278.5 1115,278.5 1115,274.5 1113,274.5 1113,274 1112,274 1112,277.5 1110,277.5 1110,274.5 1109,274.5 1109,274 1108,274 1108,276.5 1106,276.5 1106,277.5 1105,277.5 1105,274.5 1104,274.5Z" fill="#ff9443"/>
<path d="M41,337.5 43,337.5 43,336 44,336 44,337 46,337 46,337.5 48,337.5 48,337 49,337 49,336.5 50,336.5 50,336 51,336 51,336.5 52,336.5 52,337.5 53,337.5 53,337 54,337 54,337.5 55,337.5 55,335.5 56,335.5 56,336 57,336 57,336.5 58,336.5 58,337 59,337 59,337.5 61,337.5 61,336.5 63,336.5 63,337 67,337 67,337.5 68,337.5 68,336 69,336 69,336.5 71,336.5 71,337 72,337 72,417 68,417 68,416.5 66,416.5 66,417 62,417 62,417.5 61,417.5 61,417 53,417 53,417.5 52,417.5 52,417 50,417 50,416.5 48,416.5 48,417 47,417 47,416.5 44,416.5 44,417 43,417 43,416.5 41,416.5ZM72,415 81,415 81,414.5 82,414.5 82,415 86,415 86,415.5 87,415.5 87,415 90,415 90,415.5 92,415.5 92,415 93,415 93,415.5 96,415.5 96,415 98,415 98,415.5 100,415.5 100,415 101,415 101,415.5 102,415.5 102,415 115,415 115,414.5 117,414.5 117,415 123,415 123,415.5 124,415.5 124,414.5 125,414.5 125,415.5 128,415.5 128,415 130,415 130,415.5 138,415.5 138,414.5 139,414.5 139,415 140,415 140,415.5 142,415.5 142,415 143,415 143,415.5 144,415.5 144,495 142,495 142,494.5 141,494.5 141,495 138,495 138,495.5 137,495.5 137,494.5 136,494.5 136,496 135,496 135,495 134,495 134,495.5 133,495.5 133,495 131,495 131,494.5 129,494.5 129,495 128,495 128,496.5 127,496.5 127,494.5 126,494.5 126,496 125,496 125,496.5 124,496.5 124,494.5 121,494.5 121,495.5 118,495.5 118,494.5 117,494.5 117,495 116,495 116,494.5 114,494.5 114,495 112,495 112,495.5 111,495.5 111,494.5 108,494.5 108,496 107,496 107,494.5 106,494.5 106,495.5 103,495.5 103,495 100,495 100,495.5 99,495.5 99,495 98,495 98,496 97,496 97,494.5 95,494.5 95,495.5 94,495.5 94,494.5 92,494.5 92,495 90,495 90,494.5 89,494.5 89,495.5 87,495.5 87,494.5 86,494.5 86,495.5 85,495.5 85,495 83,495 83,494.5 81,494.5 81,495 80,495 80,495.5 79,495.5 79,496 78,496 78,494.5 76,494.5 76,495 75,495 75,495.5 74,495.5 74,495 72,495ZM144,337.5 147,337.5 147,336.5 148,336.5 148,337.5 151,337.5 151,336 152,336 152,337.5 153,337.5 153,336 154,336 154,336.5 155,336.5 155,337 156,337 156,337.5 158,337.5 158,336 159,336 159,335.5 160,335.5 160,337.5 163,337.5 163,336 164,336 164,336.5 165,336.5 165,336 166,336 166,337 167,337 167,337.5 168,337.5 168,337 169,337 169,337.5 170,337.5 170,336.5 171,336.5 171,337 172,337 172,336.5 173,336.5 173,337 174,337 174,337.5 176,337.5 176,337 177,337 177,337.5 178,337.5 178,337 179,337 179,337.5 180,337.5 180,336 181,336 181,337.5 182,337.5 182,337 183,337 183,337.5 184,337.5 184,336 186,336 186,336.5 187,336.5 187,337 188,337 188,337.5 189,337.5 189,337 190,337 190,336.5 191,336.5 191,337 193,337 193,337.5 195,337.5 195,336.5 197,336.5 197,337 198,337 198,337.5 201,337.5 201,336 202,336 202,337.5 204,337.5 204,336.5 205,336.5 205,337.5 208,337.5 208,336.5 209,336.5 209,337.5 210,337.5 210,336 211,336 211,336.5 212,336.5 212,337 215,337 215,337.5 216,337.5 216,417 215,417 215,416.5 213,416.5 213,417 212,417 212,417.5 210,417.5 210,417 206,417 206,417.5 204,417.5 204,417 203,417 203,416.5 199,416.5 199,417 197,417 197,416.5 190,416.5 190,417 189,417 189,416.5 188,416.5 188,417.5 187,417.5 187,417 178,417 178,418 177,418 177,417 174,417 174,417.5 173,417.5 173,417 172,417 172,418 170,418 170,417 166,417 166,416.5 165,416.5 165,417 161,417 161,416.5 159,416.5 159,417 158,417 158,416.5 156,416.5 156,417 154,417 154,416.5 147,416.5 147,417.5 146,417.5 146,417 144,417ZM216,415.5 217,415.5 217,415 219,415 219,414.5 220,414.5 220,415 227,415 227,415.5 228,415.5 228,415 229,415 229,413.5 230,413.5 230,415 231,415 231,415.5 232,415.5 232,415 233,415 233,415.5 234,415.5 234,415 235,415 235,415.5 243,415.5 243,414.5 244,414.5 244,415 252,415 252,414.5 254,414.5 254,415 256,415 256,414.5 257,414.5 257,415 260,415 260,414 261,414 261,415 264,415 264,415.5 265,415.5 265,415 266,415 266,415.5 268,415.5 268,415 271,415 271,415.5 274,415.5 274,415 275,415 275,415.5 278,415.5 278,415 279,415 279,415.5 284,415.5 284,414.5 285,414.5 285,415.5 286,415.5 286,415 288,415 288,494.5 286,494.5 286,496 285,496 285,495.5 284,495.5 284,494.5 283,494.5 283,495 282,495 282,494.5 281,494.5 281,495.5 280,495.5 280,496 279,496 279,495 278,495 278,494.5 277,494.5 277,495 276,495 276,494.5 275,494.5 275,495.5 273,495.5 273,496 272,496 272,494.5 271,494.5 271,495 270,495 270,495.5 269,495.5 269,494.5 267,494.5 267,495.5 266,495.5 266,495 265,495 265,496 264,496 264,494.5 262,494.5 262,495.5 261,495.5 261,495 260,495 260,495.5 259,495.5 259,494.5 258,494.5 258,495 256,495 256,494.5 255,494.5 255,495.5 254,495.5 254,494.5 250,494.5 250,496 249,496 249,494.5 245,494.5 245,496 243,496 243,494.5 241,494.5 241,495.5 238,495.5 238,494.5 236,494.5 236,495.5 234,495.5 234,496 233,496 233,495 232,495 232,494.5 230,494.5 230,495 229,495 229,495.5 227,495.5 227,494.5 223,494.5 223,496 222,496 222,494.5 221,494.5 221,495 219,495 219,495.5 218,495.5 218,494.5 216,494.5ZM288,336.5 289,336.5 289,337.5 291,337.5 291,336.5 294,336.5 294,337.5 295,337.5 295,337 296,337 296,337.5 300,337.5 300,336.5 301,336.5 301,337.5 302,337.5 302,337 303,337 303,337.5 304,337.5 304,337 305,337 305,336 306,336 306,337.5 307,337.5 307,337 309,337 309,337.5 310,337.5 310,336.5 311,336.5 311,337.5 312,337.5 312,337 313,337 313,337.5 316,337.5 316,336.5 317,336.5 317,337.5 319,337.5 319,336.5 321,336.5 321,337.5 323,337.5 323,336 324,336 324,336.5 325,336.5 325,337.5 326,337.5 326,337 327,337 327,336.5 328,336.5 328,337 330,337 330,337.5 331,337.5 331,337 332,337 332,333.5 334,333.5 334,337.5 335,337.5 335,337 336,337 336,337.5 337,337.5 337,336 339,336 339,337 341,337 341,337.5 343,337.5 343,336 344,336 344,336.5 345,336.5 345,337 346,337 346,337.5 347,337.5 347,336.5 349,336.5 349,337.5 350,337.5 350,337 353,337 353,337.5 357,337.5 357,336 358,336 358,336.5 359,336.5 359,337 360,337 360,416.5 358,416.5 358,417 357,417 357,416.5 354,416.5 354,417 353,417 353,416.5 346,416.5 346,417 344,417 344,417.5 343,417.5 343,416.5 341,416.5 341,417 339,417 339,417.5 337,417.5 337,417 331,417 331,417.5 329,417.5 329,418 328,418 328,417 318,417 318,416.5 309,416.5 309,417 305,417 305,416.5 304,416.5 304,417 300,417 300,417.5 298,417.5 298,417 291,417 291,417.5 290,417.5 290,416.5 288,416.5ZM360,415.5 361,415.5 361,415 362,415 362,415.5 367,415.5 367,414.5 369,414.5 369,415.5 371,415.5 371,415 373,415 373,414.5 374,414.5 374,415 380,415 380,414 381,414 381,415 387,415 387,414.5 389,414.5 389,415 390,415 390,415.5 391,415.5 391,415 392,415 392,415.5 396,415.5 396,415 397,415 397,414.5 398,414.5 398,415.5 400,415.5 400,415 406,415 406,414 407,414 407,414.5 408,414.5 408,415 413,415 413,414.5 414,414.5 414,415 419,415 419,415.5 420,415.5 420,414.5 421,414.5 421,415.5 423,415.5 423,415 425,415 425,415.5 430,415.5 430,415 432,415 432,496 431,496 431,495 430,495 430,494.5 429,494.5 429,495 428,495 428,494.5 427,494.5 427,495.5 424,495.5 424,494.5 422,494.5 422,495 420,495 420,495.5 419,495.5 419,494.5 418,494.5 418,496 417,496 417,494.5 416,494.5 416,495 414,495 414,494.5 413,494.5 413,495.5 412,495.5 412,494.5 410,494.5 410,495 409,495 409,494.5 408,494.5 408,495.5 407,495.5 407,494.5 406,494.5 406,495.5 404,495.5 404,494.5 402,494.5 402,495 400,495 400,494.5 396,494.5 396,498 395,498 395,494.5 392,494.5 392,495.5 391,495.5 391,494.5 389,494.5 389,495 388,495 388,495.5 386,495.5 386,496 385,496 385,494.5 383,494.5 383,496 381,496 381,494.5 378,494.5 378,495.5 375,495.5 375,494.5 372,494.5 372,496 371,496 371,494.5 370,494.5 370,495 369,495 369,494.5 367,494.5 367,495.5 366,495.5 366,494.5 364,494.5 364,495.5 362,495.5 362,496 361,496 361,494.5 360,494.5ZM432,336 433,336 433,337.5 434,337.5 434,337 435,337 435,336 436,336 436,336.5 438,336.5 438,337.5 439,337.5 439,336.5 441,336.5 441,337 442,337 442,337.5 444,337.5 444,337 446,337 446,334 447,334 447,337.5 448,337.5 448,336 449,336 449,336.5 450,336.5 450,336 451,336 451,337.5 452,337.5 452,337 453,337 453,337.5 454,337.5 454,336.5 455,336.5 455,337 457,337 457,337.5 458,337.5 458,336.5 459,336.5 459,337.5 460,337.5 460,336 461,336 461,337.5 462,337.5 462,336.5 463,336.5 463,337 464,337 464,336.5 465,336.5 465,337.5 468,337.5 468,336.5 469,336.5 469,337.5 470,337.5 470,337 471,337 471,336 472,336 472,337.5 473,337.5 473,333.5 474,333.5 474,337.5 477,337.5 477,337 478,337 478,336.5 479,336.5 479,337 481,337 481,337.5 482,337.5 482,335.5 484,335.5 484,337 485,337 485,337.5 486,337.5 486,336 488,336 488,337.5 489,337.5 489,337 490,337 490,335.5 491,335.5 491,336.5 493,336.5 493,337.5 494,337.5 494,336.5 497,336.5 497,337.5 500,337.5 500,337 501,337 501,336.5 503,336.5 503,337.5 504,337.5 504,416.5 503,416.5 503,417 497,417 497,417.5 496,417.5 496,417 492,417 492,417.5 491,417.5 491,417 487,417 487,416.5 486,416.5 486,417 483,417 483,417.5 481,417.5 481,416.5 474,416.5 474,417 473,417 473,417.5 472,417.5 472,417 470,417 470,416.5 469,416.5 469,417 467,417 467,418 465,418 465,417 463,417 463,417.5 462,417.5 462,417 461,417 461,417.5 460,417.5 460,417 459,417 459,417.5 458,417.5 458,417 451,417 451,416.5 445,416.5 445,417 443,417 443,416.5 434,416.5 434,417.5 433,417.5 433,417 432,417ZM504,415.5 506,415.5 506,415 507,415 507,414.5 508,414.5 508,415 512,415 512,415.5 513,415.5 513,415 515,415 515,414.5 516,414.5 516,415.5 520,415.5 520,415 521,415 521,415.5 526,415.5 526,414.5 528,414.5 528,415.5 533,415.5 533,415 537,415 537,414.5 538,414.5 538,415 542,415 542,414.5 544,414.5 544,415 545,415 545,414.5 546,414.5 546,415 547,415 547,414.5 549,414.5 549,415 551,415 551,415.5 552,415.5 552,415 553,415 553,414.5 555,414.5 555,415.5 561,415.5 561,415 562,415 562,415.5 568,415.5 568,415 576,415 576,494.5 575,494.5 575,495 574,495 574,494.5 573,494.5 573,495.5 571,495.5 571,496 570,496 570,494.5 567,494.5 567,495.5 566,495.5 566,495 565,495 565,496 564,496 564,494.5 562,494.5 562,495.5 561,495.5 561,494.5 557,494.5 557,496 556,496 556,495.5 555,495.5 555,496.5 554,496.5 554,494.5 553,494.5 553,496 552,496 552,494.5 550,494.5 550,495 549,495 549,495.5 547,495.5 547,494.5 544,494.5 544,495.5 542,495.5 542,494.5 539,494.5 539,496 538,496 538,495.5 537,495.5 537,494.5 534,494.5 534,495.5 533,495.5 533,494.5 530,494.5 530,495 529,495 529,498 528,498 528,497.5 527,497.5 527,495 526,495 526,494.5 525,494.5 525,495 522,495 522,495.5 520,495.5 520,494.5 518,494.5 518,495.5 516,495.5 516,495 515,495 515,494.5 512,494.5 512,495.5 510,495.5 510,494.5 509,494.5 509,496 507,496 507,494.5 505,494.5 505,496 504,496ZM576,337.5 579,337.5 579,336.5 580,336.5 580,337 582,337 582,337.5 586,337.5 586,336 587,336 587,336.5 588,336.5 588,337.5 589,337.5 589,336.5 590,336.5 590,337 592,337 592,337.5 593,337.5 593,337 594,337 594,336.5 595,336.5 595,337.5 599,337.5 599,336 601,336 601,336.5 602,336.5 602,337.5 604,337.5 604,337 606,337 606,336.5 607,336.5 607,336 608,336 608,337.5 609,337.5 609,336.5 611,336.5 611,337.5 613,337.5 613,336.5 615,336.5 615,337.5 619,337.5 619,336 620,336 620,337 621,337 621,336.5 622,336.5 622,337.5 623,337.5 623,335.5 624,335.5 624,336 625,336 625,337.5 628,337.5 628,336.5 629,336.5 629,337 630,337 630,336.5 631,336.5 631,337.5 634,337.5 634,333.5 636,333.5 636,337.5 637,337.5 637,337 638,337 638,337.5 639,337.5 639,336 642,336 642,337.5 643,337.5 643,337 645,337 645,336.5 646,336.5 646,336 647,336 647,337.5 648,337.5 648,417 646,417 646,417.5 644,417.5 644,417 641,417 641,416.5 640,416.5 640,417 635,417 635,417.5 633,417.5 633,416.5 632,416.5 632,417 631,417 631,416.5 629,416.5 629,417 627,417 627,416.5 622,416.5 622,417 621,417 621,417.5 619,417.5 619,416.5 618,416.5 618,417 615,417 615,417.5 612,417.5 612,417 610,417 610,417.5 608,417.5 608,418 606,418 606,417 600,417 600,417.5 599,417.5 599,417 598,417 598,416.5 597,416.5 597,417 596,417 596,416.5 591,416.5 591,417 589,417 589,416.5 581,416.5 581,417.5 579,417.5 579,417 576,417ZM648,415.5 650,415.5 650,415 651,415 651,415.5 657,415.5 657,414.5 658,414.5 658,415.5 659,415.5 659,415 660,415 660,415.5 661,415.5 661,415 662,415 662,414.5 663,414.5 663,415 666,415 666,414 667,414 667,415 675,415 675,414.5 676,414.5 676,415 679,415 679,415.5 680,415.5 680,415 681,415 681,414.5 683,414.5 683,415 684,415 684,415.5 687,415.5 687,415 688,415 688,415.5 689,415.5 689,415 690,415 690,414.5 692,414.5 692,415 696,415 696,415.5 697,415.5 697,414.5 699,414.5 699,415 703,415 703,414.5 705,414.5 705,415 713,415 713,415.5 714,415.5 714,414 716,414 716,415.5 720,415.5 720,495.5 719,495.5 719,494.5 715,494.5 715,495 714,495 714,494.5 713,494.5 713,496 712,496 712,494.5 709,494.5 709,495.5 707,495.5 707,495 704,495 704,495.5 703,495.5 703,494.5 700,494.5 700,496 699,496 699,495.5 698,495.5 698,494.5 695,494.5 695,499 693,499 693,494.5 692,494.5 692,495 691,495 691,494.5 690,494.5 690,498 688,498 688,494.5 687,494.5 687,495.5 685,495.5 685,494.5 684,494.5 684,495 682,495 682,494.5 681,494.5 681,498.5 680,498.5 680,494.5 678,494.5 678,496 677,496 677,494.5 675,494.5 675,495 674,495 674,494.5 673,494.5 673,495.5 672,495.5 672,496 670,496 670,494.5 668,494.5 668,495 667,495 667,496 664,496 664,494.5 660,494.5 660,495.5 658,495.5 658,494.5 657,494.5 657,495 655,495 655,494.5 654,494.5 654,495.5 652,495.5 652,496 651,496 651,494.5 650,494.5 650,495.5 649,495.5 649,495 648,495ZM720,337 721,337 721,336.5 723,336.5 723,337.5 724,337.5 724,336 726,336 726,337.5 730,337.5 730,336.5 731,336.5 731,337 732,337 732,337.5 735,337.5 735,337 738,337 738,337.5 739,337.5 739,337 740,337 740,337.5 742,337.5 742,336.5 744,336.5 744,337.5 745,337.5 745,337 746,337 746,334 747,334 747,333.5 748,333.5 748,337.5 749,337.5 749,337 750,337 750,337.5 751,337.5 751,336.5 752,336.5 752,336 753,336 753,337 754,337 754,336 755,336 755,336.5 756,336.5 756,337 757,337 757,337.5 759,337.5 759,337 761,337 761,336.5 762,336.5 762,336 763,336 763,337 765,337 765,336 766,336 766,336.5 768,336.5 768,337.5 769,337.5 769,336.5 771,336.5 771,337.5 774,337.5 774,334 776,334 776,337 777,337 777,336 779,336 779,337.5 780,337.5 780,337 781,337 781,337.5 782,337.5 782,336.5 783,336.5 783,337.5 785,337.5 785,336.5 786,336.5 786,336 787,336 787,337 788,337 788,336 789,336 789,336.5 790,336.5 790,337.5 792,337.5 792,417 790,417 790,416.5 787,416.5 787,417 784,417 784,416.5 783,416.5 783,417 782,417 782,416.5 781,416.5 781,417.5 780,417.5 780,417 778,417 778,416.5 777,416.5 777,417 772,417 772,417.5 771,417.5 771,417 761,417 761,417.5 760,417.5 760,416.5 758,416.5 758,417 757,417 757,416.5 754,416.5 754,417.5 753,417.5 753,417 750,417 750,416.5 749,416.5 749,417.5 748,417.5 748,416.5 747,416.5 747,417 740,417 740,417.5 739,417.5 739,417 731,417 731,417.5 730,417.5 730,417 726,417 726,416.5 724,416.5 724,417.5 723,417.5 723,416.5 720,416.5ZM792,415 794,415 794,414.5 795,414.5 795,415 797,415 797,415.5 798,415.5 798,415 799,415 799,415.5 802,415.5 802,414.5 804,414.5 804,415.5 811,415.5 811,414.5 812,414.5 812,415.5 814,415.5 814,415 818,415 818,414.5 819,414.5 819,415 822,415 822,414.5 823,414.5 823,415 824,415 824,414.5 825,414.5 825,415 827,415 827,414.5 828,414.5 828,415 834,415 834,414.5 836,414.5 836,415 839,415 839,415.5 842,415.5 842,415 843,415 843,414.5 844,414.5 844,415 845,415 845,415.5 848,415.5 848,415 849,415 849,415.5 851,415.5 851,414.5 853,414.5 853,415.5 855,415.5 855,415 857,415 857,414.5 859,414.5 859,415 863,415 863,415.5 864,415.5 864,494.5 863,494.5 863,495.5 861,495.5 861,494.5 860,494.5 860,495 859,495 859,494.5 858,494.5 858,496 857,496 857,495 856,495 856,494.5 855,494.5 855,495.5 854,495.5 854,495 853,495 853,495.5 852,495.5 852,495 851,495 851,494.5 850,494.5 850,495.5 848,495.5 848,496 847,496 847,494.5 844,494.5 844,496 843,496 843,495.5 842,495.5 842,495 841,495 841,494.5 840,494.5 840,496.5 839,496.5 839,494.5 838,494.5 838,495.5 835,495.5 835,494.5 834,494.5 834,498 832,498 832,494.5 830,494.5 830,495.5 828,495.5 828,494.5 827,494.5 827,495 826,495 826,494.5 825,494.5 825,495.5 824,495.5 824,494.5 820,494.5 820,495.5 819,495.5 819,495 818,495 818,494.5 817,494.5 817,495 814,495 814,495.5 813,495.5 813,494.5 811,494.5 811,495.5 809,495.5 809,495 807,495 807,494.5 803,494.5 803,495.5 802,495.5 802,496 800,496 800,494.5 796,494.5 796,499 795,499 795,494.5 792,494.5ZM864,337.5 866,337.5 866,336 867,336 867,337.5 869,337.5 869,336 870,336 870,337.5 872,337.5 872,337 873,337 873,337.5 874,337.5 874,337 875,337 875,337.5 877,337.5 877,336 878,336 878,336.5 879,336.5 879,337.5 880,337.5 880,336.5 881,336.5 881,337.5 885,337.5 885,336 887,336 887,337.5 891,337.5 891,336.5 892,336.5 892,337.5 893,337.5 893,337 894,337 894,337.5 896,337.5 896,336 898,336 898,337.5 901,337.5 901,336 902,336 902,337.5 903,337.5 903,337 904,337 904,336.5 905,336.5 905,337 906,337 906,337.5 908,337.5 908,337 909,337 909,333 911,333 911,337.5 913,337.5 913,336.5 915,336.5 915,337 916,337 916,336.5 917,336.5 917,337 918,337 918,336.5 920,336.5 920,337.5 922,337.5 922,337 924,337 924,336.5 926,336.5 926,337.5 928,337.5 928,334 929,334 929,337.5 930,337.5 930,337 931,337 931,336.5 932,336.5 932,336 933,336 933,337.5 935,337.5 935,336.5 936,336.5 936,416.5 934,416.5 934,417 933,417 933,416.5 926,416.5 926,417 924,417 924,416.5 923,416.5 923,417 921,417 921,416.5 920,416.5 920,417.5 918,417.5 918,417 915,417 915,418 913,418 913,417 910,417 910,417.5 909,417.5 909,417 907,417 907,417.5 905,417.5 905,417 898,417 898,416.5 896,416.5 896,417 895,417 895,416.5 892,416.5 892,417 890,417 890,417.5 888,417.5 888,416.5 887,416.5 887,417 883,417 883,417.5 882,417.5 882,417 876,417 876,418 875,418 875,417 869,417 869,417.5 867,417.5 867,416.5 864,416.5ZM936,415.5 938,415.5 938,414.5 940,414.5 940,416 941,416 941,415.5 943,415.5 943,415 945,415 945,415.5 949,415.5 949,415 953,415 953,414.5 955,414.5 955,415 960,415 960,414.5 961,414.5 961,415 963,415 963,414.5 965,414.5 965,415 970,415 970,415.5 971,415.5 971,414.5 973,414.5 973,415.5 974,415.5 974,415 975,415 975,415.5 977,415.5 977,415 980,415 980,415.5 981,415.5 981,414.5 982,414.5 982,415 986,415 986,414.5 988,414.5 988,415 996,415 996,414 998,414 998,415 1000,415 1000,415.5 1003,415.5 1003,415 1004,415 1004,415.5 1007,415.5 1007,415 1008,415 1008,496 1006,496 1006,494.5 1005,494.5 1005,495 1002,495 1002,494.5 999,494.5 999,495.5 996,495.5 996,494.5 995,494.5 995,495.5 993,495.5 993,495 992,495 992,496.5 991,496.5 991,494.5 988,494.5 988,495.5 987,495.5 987,496 986,496 986,494.5 985,494.5 985,496 984,496 984,494.5 982,494.5 982,495 981,495 981,494.5 979,494.5 979,495 976,495 976,495.5 975,495.5 975,494.5 974,494.5 974,495.5 973,495.5 973,495 972,495 972,495.5 971,495.5 971,495 970,495 970,494.5 968,494.5 968,495 965,495 965,495.5 964,495.5 964,494.5 963,494.5 963,495 962,495 962,495.5 960,495.5 960,494.5 958,494.5 958,495 956,495 956,499 955,499 955,495 954,495 954,494.5 953,494.5 953,495 952,495 952,495.5 951,495.5 951,495 950,495 950,495.5 949,495.5 949,495 948,495 948,494.5 947,494.5 947,496 946,496 946,495.5 945,495.5 945,494.5 944,494.5 944,495.5 943,495.5 943,495 942,495 942,496 941,496 941,494.5 940,494.5 940,495 939,495 939,496 938,496 938,494.5 936,494.5ZM1008,337 1009,337 1009,337.5 1010,337.5 1010,336.5 1013,336.5 1013,337.5 1014,337.5 1014,337 1015,337 1015,336 1016,336 1016,337.5 1020,337.5 1020,336 1022,336 1022,337.5 1023,337.5 1023,337 1024,337 1024,336.5 1027,336.5 1027,337.5 1031,337.5 1031,336.5 1032,336.5 1032,337 1035,337 1035,336 1037,336 1037,337.5 1039,337.5 1039,337 1040,337 1040,336 1041,336 1041,336.5 1043,336.5 1043,337.5 1044,337.5 1044,333.5 1045,333.5 1045,337.5 1048,337.5 1048,336 1050,336 1050,337.5 1052,337.5 1052,335.5 1053,335.5 1053,336 1054,336 1054,336.5 1055,336.5 1055,337 1056,337 1056,337.5 1058,337.5 1058,337 1060,337 1060,337.5 1061,337.5 1061,336 1062,336 1062,336.5 1064,336.5 1064,337 1065,337 1065,336.5 1067,336.5 1067,337 1068,337 1068,336.5 1071,336.5 1071,337.5 1072,337.5 1072,336 1073,336 1073,337.5 1074,337.5 1074,336 1075,336 1075,337.5 1077,337.5 1077,336 1078,336 1078,336.5 1080,336.5 1080,417 1079,417 1079,416.5 1078,416.5 1078,417.5 1076,417.5 1076,416.5 1069,416.5 1069,417 1068,417 1068,416.5 1063,416.5 1063,417 1062,417 1062,416.5 1061,416.5 1061,417.5 1059,417.5 1059,417 1054,417 1054,417.5 1052,417.5 1052,417 1047,417 1047,418 1046,418 1046,417.5 1045,417.5 1045,417 1038,417 1038,416.5 1037,416.5 1037,417 1035,417 1035,416.5 1034,416.5 1034,417 1033,417 1033,417.5 1031,417.5 1031,417 1030,417 1030,416.5 1028,416.5 1028,417 1027,417 1027,416.5 1026,416.5 1026,417.5 1024,417.5 1024,416.5 1022,416.5 1022,417 1018,417 1018,417.5 1017,417.5 1017,417 1012,417 1012,417.5 1011,417.5 1011,417 1008,417ZM1080,415.5 1081,415.5 1081,415 1082,415 1082,414.5 1083,414.5 1083,415.5 1084,415.5 1084,415 1089,415 1089,414.5 1091,414.5 1091,415 1092,415 1092,415.5 1093,415.5 1093,415 1094,415 1094,414.5 1095,414.5 1095,415 1097,415 1097,415.5 1099,415.5 1099,414.5 1101,414.5 1101,415 1103,415 1103,415.5 1104,415.5 1104,415 1105,415 1105,415.5 1106,415.5 1106,414.5 1107,414.5 1107,415 1113,415 1113,414.5 1114,414.5 1114,415 1122,415 1122,414.5 1124,414.5 1124,415 1127,415 1127,415.5 1129,415.5 1129,415 1130,415 1130,415.5 1131,415.5 1131,415 1132,415 1132,415.5 1135,415.5 1135,494.5 1134,494.5 1134,495 1133,495 1133,495.5 1131,495.5 1131,496 1130,496 1130,494.5 1128,494.5 1128,496 1127,496 1127,494.5 1126,494.5 1126,495.5 1123,495.5 1123,495 1122,495 1122,496 1121,496 1121,494.5 1118,494.5 1118,495 1116,495 1116,494.5 1114,494.5 1114,495 1113,495 1113,494.5 1112,494.5 1112,498 1110,498 1110,494.5 1107,494.5 1107,495.5 1105,495.5 1105,496 1104,496 1104,494.5 1102,494.5 1102,495 1100,495 1100,496 1099,496 1099,494.5 1097,494.5 1097,495.5 1096,495.5 1096,495 1095,495 1095,496 1094,496 1094,494.5 1091,494.5 1091,495 1090,495 1090,496 1088,496 1088,495 1087,495 1087,494.5 1086,494.5 1086,495 1085,495 1085,495.5 1083,495.5 1083,494.5 1080,494.5Z" fill="#acf20c"/>
<path d="M42,639 44,639 44,638 46,638 46,639 47,639 47,639.5 48,639.5 48,719.5 46,719.5 46,720.5 45,720.5 45,720 44,720 44,721 43,721 43,719.5 42,719.5ZM48,560.5 49,560.5 49,559.5 50,559.5 50,560 52,560 52,560.5 53,560.5 53,561 54,561 54,559.5 57,559.5 57,561 58,561 58,560.5 60,560.5 60,561 61,561 61,559.5 63,559.5 63,561 64,561 64,560 67,560 67,561 69,561 69,560.5 72,560.5 72,560 74,560 74,560.5 75,560.5 75,561 77,561 77,560 78,560 78,560.5 80,560.5 80,561 81,561 81,560 84,560 84,560.5 85,560.5 85,561 86,561 86,560.5 87,560.5 87,559 88,559 88,561 89,561 89,559.5 90,559.5 90,560.5 91,560.5 91,559.5 92,559.5 92,560.5 93,560.5 93,561 94,561 94,560 95,560 95,560.5 96,560.5 96,560 97,560 97,560.5 98,560.5 98,561 99,561 99,560.5 101,560.5 101,559.5 102,559.5 102,559 103,559 103,560.5 104,560.5 104,560 105,560 105,561 106,561 106,560.5 108,560.5 108,559.5 110,559.5 110,560.5 111,560.5 111,560 112,560 112,559.5 113,559.5 113,560.5 115,560.5 115,561 116,561 116,559.5 117,559.5 117,560.5 118,560.5 118,561 119,561 119,560.5 120,560.5 120,641 113,641 113,641.5 111,641.5 111,641 106,641 106,641.5 104,641.5 104,640.5 103,640.5 103,641 102,641 102,640.5 101,640.5 101,641 99,641 99,640.5 91,640.5 91,641 90,641 90,642.5 88,642.5 88,641 82,641 82,641.5 81,641.5 81,641 78,641 78,641.5 77,641.5 77,641 74,641 74,642 73,642 73,641.5 72,641.5 72,641 67,641 67,641.5 66,641.5 66,640.5 65,640.5 65,641 64,641 64,640.5 61,640.5 61,641 59,641 59,640.5 50,640.5 50,641 48,641ZM120,639.5 122,639.5 122,639 123,639 123,639.5 127,639.5 127,638 129,638 129,639.5 133,639.5 133,639 134,639 134,638.5 136,638.5 136,639 143,639 143,638 145,638 145,639 155,639 155,638.5 157,638.5 157,639 159,639 159,639.5 161,639.5 161,638.5 163,638.5 163,639.5 165,639.5 165,639 166,639 166,638.5 167,638.5 167,639 168,639 168,639.5 169,639.5 169,639 170,639 170,639.5 171,639.5 171,639 175,639 175,638.5 176,638.5 176,639 185,639 185,638.5 186,638.5 186,639 190,639 190,639.5 191,639.5 191,639 192,639 192,719.5 191,719.5 191,720 190,720 190,720.5 189,720.5 189,719 188,719 188,720.5 187,720.5 187,720 186,720 186,721 185,721 185,719.5 184,719.5 184,720 182,720 182,720.5 181,720.5 181,719 180,719 180,721 179,721 179,719.5 178,719.5 178,719 177,719 177,719.5 176,719.5 176,720 175,720 175,719 174,719 174,720.5 173,720.5 173,720 172,720 172,719 171,719 171,719.5 169,719.5 169,720.5 167,720.5 167,719.5 165,719.5 165,719 164,719 164,719.5 163,719.5 163,720 162,720 162,719.5 161,719.5 161,719 160,719 160,720 158,720 158,720.5 157,720.5 157,719.5 156,719.5 156,719 154,719 154,720.5 153,720.5 153,719.5 152,719.5 152,719 151,719 151,720.5 149,720.5 149,719 148,719 148,719.5 147,719.5 147,719 146,719 146,720 143,720 143,719 141,719 141,720.5 139,720.5 139,719 138,719 138,720 136,720 136,719.5 135,719.5 135,719 134,719 134,719.5 133,719.5 133,719 132,719 132,720.5 131,720.5 131,720 130,720 130,721 129,721 129,719.5 128,719.5 128,720 126,720 126,720.5 125,720.5 125,719.5 124,719.5 124,720.5 123,720.5 123,719.5 121,719.5 121,720.5 120,720.5ZM192,561 193,561 193,559.5 194,559.5 194,561 195,561 195,560.5 197,560.5 197,559 199,559 199,560.5 200,560.5 200,561 202,561 202,559.5 203,559.5 203,560 204,560 204,559.5 205,559.5 205,560.5 206,560.5 206,561 207,561 207,560.5 208,560.5 208,561 209,561 209,559.5 210,559.5 210,561 211,561 211,560.5 212,560.5 212,561 213,561 213,560 214,560 214,560.5 216,560.5 216,559 217,559 217,559.5 218,559.5 218,560.5 220,560.5 220,561 221,561 221,559.5 223,559.5 223,560.5 224,560.5 224,561 225,561 225,559.5 226,559.5 226,561 229,561 229,560 230,560 230,561 231,561 231,560.5 232,560.5 232,561 233,561 233,559.5 234,559.5 234,561 236,561 236,560.5 238,560.5 238,559 239,559 239,561 241,561 241,559 242,559 242,560 244,560 244,561 246,561 246,560 249,560 249,561 250,561 250,559.5 251,559.5 251,560 253,560 253,560.5 254,560.5 254,559.5 255,559.5 255,561 256,561 256,560.5 257,560.5 257,559 258,559 258,560 260,560 260,560.5 261,560.5 261,560 264,560 264,640.5 259,640.5 259,641 258,641 258,640.5 256,640.5 256,641.5 254,641.5 254,641 246,641 246,641.5 244,641.5 244,641 241,641 241,641.5 239,641.5 239,641 238,641 238,640.5 236,640.5 236,641 235,641 235,640.5 234,640.5 234,641 230,641 230,640.5 228,640.5 228,641 227,641 227,640.5 226,640.5 226,641 225,641 225,640.5 223,640.5 223,641 222,641 222,641.5 220,641.5 220,641 213,641 213,641.5 211,641.5 211,641 203,641 203,640.5 196,640.5 196,641 194,641 194,640.5 192,640.5ZM264,638.5 265,638.5 265,639.5 273,639.5 273,639 274,639 274,639.5 279,639.5 279,639 280,639 280,638.5 281,638.5 281,638 282,638 282,639 288,639 288,638 289,638 289,638.5 290,638.5 290,639 292,639 292,638.5 293,638.5 293,639 298,639 298,638.5 299,638.5 299,639.5 301,639.5 301,639 302,639 302,638.5 303,638.5 303,639.5 306,639.5 306,638.5 307,638.5 307,639 308,639 308,639.5 312,639.5 312,639 316,639 316,639.5 317,639.5 317,638.5 319,638.5 319,639 323,639 323,638.5 325,638.5 325,639 331,639 331,639.5 332,639.5 332,638.5 333,638.5 333,639.5 336,639.5 336,720 335,720 335,720.5 334,720.5 334,719.5 333,719.5 333,719 332,719 332,720 330,720 330,719 329,719 329,719.5 328,719.5 328,720 326,720 326,719 325,719 325,720.5 324,720.5 324,720 323,720 323,721 322,721 322,719.5 319,719.5 319,720 318,720 318,719.5 317,719.5 317,720 316,720 316,719.5 314,719.5 314,719 313,719 313,719.5 311,719.5 311,720 310,720 310,719.5 308,719.5 308,720 307,720 307,720.5 306,720.5 306,719.5 303,719.5 303,720 300,720 300,719.5 299,719.5 299,719 296,719 296,720.5 295,720.5 295,719 294,719 294,719.5 293,719.5 293,719 292,719 292,720 290,720 290,720.5 289,720.5 289,719.5 288,719.5 288,720 286,720 286,720.5 285,720.5 285,719 284,719 284,720 283,720 283,719.5 282,719.5 282,720 281,720 281,719.5 280,719.5 280,719 279,719 279,719.5 278,719.5 278,720 276,720 276,721 275,721 275,719 274,719 274,720.5 273,720.5 273,719 272,719 272,720.5 271,720.5 271,719.5 269,719.5 269,720 268,720 268,719.5 267,719.5 267,720.5 266,720.5 266,719.5 264,719.5ZM336,561 338,561 338,560.5 339,560.5 339,559.5 341,559.5 341,560.5 342,560.5 342,561 343,561 343,560.5 345,560.5 345,559.5 347,559.5 347,561 348,561 348,560.5 349,560.5 349,561 350,561 350,560.5 351,560.5 351,559.5 352,559.5 352,560 354,560 354,560.5 357,560.5 357,561 358,561 358,559.5 359,559.5 359,559 360,559 360,560.5 362,560.5 362,561 363,561 363,559.5 364,559.5 364,560.5 366,560.5 366,561 368,561 368,560.5 369,560.5 369,560 370,560 370,560.5 372,560.5 372,561 373,561 373,559 374,559 374,560.5 376,560.5 376,559.5 377,559.5 377,560 379,560 379,561 381,561 381,560.5 382,560.5 382,560 383,560 383,559.5 384,559.5 384,560.5 385,560.5 385,561 386,561 386,560.5 388,560.5 388,560 389,560 389,560.5 393,560.5 393,559.5 394,559.5 394,560 395,560 395,561 396,561 396,560.5 398,560.5 398,561 399,561 399,560 401,560 401,560.5 403,560.5 403,561 404,561 404,560 405,560 405,559.5 406,559.5 406,561 407,561 407,560.5 408,560.5 408,641 407,641 407,640.5 405,640.5 405,641 404,641 404,641.5 402,641.5 402,640.5 400,640.5 400,641 396,641 396,641.5 395,641.5 395,641 387,641 387,641.5 385,641.5 385,641 384,641 384,640.5 383,640.5 383,641 382,641 382,640.5 379,640.5 379,641 377,641 377,640.5 376,640.5 376,641 375,641 375,640.5 374,640.5 374,641 373,641 373,640.5 370,640.5 370,641 367,641 367,641.5 366,641.5 366,641 363,641 363,641.5 362,641.5 362,641 361,641 361,641.5 359,641.5 359,641 356,641 356,641.5 354,641.5 354,641 351,641 351,640.5 350,640.5 350,641 347,641 347,640.5 342,640.5 342,641 341,641 341,640.5 337,640.5 337,641 336,641ZM408,639 409,639 409,638.5 410,638.5 410,639 413,639 413,638.5 415,638.5 415,639.5 416,639.5 416,639 418,639 418,638.5 420,638.5 420,639.5 421,639.5 421,639 422,639 422,639.5 423,639.5 423,638.5 424,638.5 424,639.5 431,639.5 431,639 432,639 432,639.5 433,639.5 433,639 434,639 434,638.5 435,638.5 435,639 442,639 442,638.5 444,638.5 444,638 445,638 445,639 451,639 451,638.5 452,638.5 452,639 454,639 454,639.5 457,639.5 457,638.5 458,638.5 458,639 459,639 459,639.5 460,639.5 460,639 461,639 461,639.5 463,639.5 463,639 464,639 464,639.5 469,639.5 469,639 471,639 471,639.5 472,639.5 472,639 474,639 474,639.5 475,639.5 475,639 479,639 479,638.5 480,638.5 480,719 479,719 479,721 477,721 477,719.5 476,719.5 476,719 474,719 474,719.5 473,719.5 473,720 471,720 471,719.5 470,719.5 470,723 469,723 469,719 468,719 468,719.5 466,719.5 466,719 465,719 465,720 464,720 464,719.5 462,719.5 462,719 461,719 461,719.5 459,719.5 459,720 458,720 458,719.5 457,719.5 457,719 454,719 454,720.5 453,720.5 453,719.5 450,719.5 450,720.5 449,720.5 449,719 447,719 447,720.5 446,720.5 446,719 445,719 445,719.5 443,719.5 443,719 442,719 442,721 441,721 441,719.5 440,719.5 440,720 439,720 439,719.5 437,719.5 437,720.5 436,720.5 436,720 435,720 435,720.5 434,720.5 434,719 433,719 433,719.5 432,719.5 432,719 431,719 431,719.5 429,719.5 429,720 427,720 427,719 425,719 425,720 424,720 424,719.5 421,719.5 421,719 420,719 420,720 418,720 418,720.5 417,720.5 417,719.5 414,719.5 414,721 413,721 413,720.5 412,720.5 412,719.5 411,719.5 411,721 410,721 410,719.5 409,719.5 409,719 408,719ZM480,561 481,561 481,560.5 482,560.5 482,556.5 483,556.5 483,561 484,561 484,560.5 485,560.5 485,559.5 486,559.5 486,560 487,560 487,560.5 491,560.5 491,560 494,560 494,561 495,561 495,559 496,559 496,560.5 498,560.5 498,561 500,561 500,559.5 501,559.5 501,560 502,560 502,560.5 506,560.5 506,559.5 507,559.5 507,561 508,561 508,560 511,560 511,560.5 512,560.5 512,560 514,560 514,561 515,561 515,559.5 516,559.5 516,560 517,560 517,560.5 518,560.5 518,561 519,561 519,560.5 521,560.5 521,559.5 524,559.5 524,560.5 525,560.5 525,560 526,560 526,560.5 527,560.5 527,560 528,560 528,560.5 529,560.5 529,561 530,561 530,560.5 531,560.5 531,560 532,560 532,561 534,561 534,560 536,560 536,560.5 537,560.5 537,561 538,561 538,559.5 540,559.5 540,560 541,560 541,560.5 544,560.5 544,560 546,560 546,561 547,561 547,560.5 549,560.5 549,559.5 550,559.5 550,560.5 551,560.5 551,559.5 552,559.5 552,640.5 549,640.5 549,641 548,641 548,641.5 546,641.5 546,641 541,641 541,641.5 540,641.5 540,641 533,641 533,640.5 532,640.5 532,641.5 531,641.5 531,640.5 530,640.5 530,641 528,641 528,640.5 527,640.5 527,641.5 525,641.5 525,641 523,641 523,640.5 522,640.5 522,641 519,641 519,640.5 518,640.5 518,641 514,641 514,642 513,642 513,641 509,641 509,641.5 507,641.5 507,641 499,641 499,641.5 498,641.5 498,641 496,641 496,640.5 494,640.5 494,641 493,641 493,640.5 488,640.5 488,641 486,641 486,640.5 482,640.5 482,641 480,641ZM552,639.5 554,639.5 554,638.5 555,638.5 555,639 562,639 562,638.5 564,638.5 564,639 567,639 567,638 569,638 569,639 574,639 574,639.5 576,639.5 576,639 578,639 578,638.5 579,638.5 579,639 580,639 580,639.5 581,639.5 581,639 582,639 582,639.5 584,639.5 584,639 588,639 588,638.5 589,638.5 589,639 596,639 596,638.5 597,638.5 597,639 600,639 600,638.5 601,638.5 601,639 607,639 607,639.5 609,639.5 609,639 610,639 610,638.5 611,638.5 611,639 612,639 612,639.5 620,639.5 620,639 621,639 621,639.5 624,639.5 624,719.5 621,719.5 621,720 619,720 619,719 618,719 618,719.5 617,719.5 617,719 615,719 615,721 614,721 614,719 613,719 613,719.5 611,719.5 611,720 609,720 609,719.5 608,719.5 608,720 605,720 605,719 604,719 604,719.5 603,719.5 603,720 601,720 601,720.5 600,720.5 600,719.5 598,719.5 598,719 597,719 597,720 596,720 596,719.5 594,719.5 594,721 592,721 592,719.5 588,719.5 588,720.5 587,720.5 587,719.5 585,719.5 585,719 584,719 584,721 583,721 583,719.5 582,719.5 582,719 581,719 581,720 580,720 580,720.5 579,720.5 579,719.5 578,719.5 578,719 577,719 577,720 575,720 575,720.5 574,720.5 574,719 573,719 573,719.5 571,719.5 571,720 570,720 570,720.5 569,720.5 569,719.5 565,719.5 565,721 564,721 564,720.5 563,720.5 563,719.5 562,719.5 562,720 560,720 560,720.5 559,720.5 559,719.5 556,719.5 556,720 555,720 555,719.5 554,719.5 554,719 553,719 553,720 552,720ZM624,561 625,561 625,560.5 626,560.5 626,560 627,560 627,559.5 628,559.5 628,561 631,561 631,560.5 632,560.5 632,560 633,560 633,560.5 635,560.5 635,559.5 636,559.5 636,560 638,560 638,560.5 640,560.5 640,559 641,559 641,560 643,560 643,561 644,561 644,560.5 645,560.5 645,561 646,561 646,559.5 647,559.5 647,560.5 650,560.5 650,559.5 652,559.5 652,560 653,560 653,560.5 654,560.5 654,561 656,561 656,559.5 658,559.5 658,560 659,560 659,560.5 663,560.5 663,559 664,559 664,559.5 666,559.5 666,560.5 669,560.5 669,559.5 671,559.5 671,560.5 673,560.5 673,557 675,557 675,560.5 678,560.5 678,559.5 679,559.5 679,560 681,560 681,561 682,561 682,560.5 683,560.5 683,559 684,559 684,559.5 686,559.5 686,561 688,561 688,559.5 691,559.5 691,560.5 693,560.5 693,561 694,561 694,559.5 695,559.5 695,560 696,560 696,640.5 695,640.5 695,641.5 693,641.5 693,640.5 690,640.5 690,641 688,641 688,640.5 681,640.5 681,641 678,641 678,640.5 677,640.5 677,641 676,641 676,641.5 674,641.5 674,641 665,641 665,641.5 664,641.5 664,641 659,641 659,641.5 658,641.5 658,641 652,641 652,640.5 650,640.5 650,641 649,641 649,640.5 647,640.5 647,641.5 646,641.5 646,640.5 645,640.5 645,641 638,641 638,640.5 637,640.5 637,641 635,641 635,641.5 634,641.5 634,642 633,642 633,641 629,641 629,640.5 628,640.5 628,641.5 626,641.5 626,641 625,641 625,640.5 624,640.5ZM696,639 698,639 698,638.5 699,638.5 699,639 705,639 705,638.5 706,638.5 706,639 711,639 711,639.5 712,639.5 712,639 713,639 713,639.5 718,639.5 718,639 720,639 720,639.5 722,639.5 722,639 723,639 723,639.5 725,639.5 725,638.5 727,638.5 727,639 733,639 733,638.5 734,638.5 734,639 737,639 737,638.5 739,638.5 739,639 744,639 744,638.5 746,638.5 746,639.5 747,639.5 747,639 748,639 748,639.5 750,639.5 750,639 751,639 751,639.5 755,639.5 755,639 756,639 756,639.5 763,639.5 763,639 764,639 764,638.5 765,638.5 765,639.5 766,639.5 766,639 768,639 768,720.5 767,720.5 767,719 766,719 766,719.5 761,719.5 761,720 760,720 760,719 757,719 757,720 755,720 755,719.5 753,719.5 753,720 751,720 751,719 750,719 750,720 749,720 749,720.5 748,720.5 748,719.5 746,719.5 746,720.5 745,720.5 745,719.5 742,719.5 742,721 741,721 741,719.5 739,719.5 739,719 738,719 738,719.5 737,719.5 737,720 735,720 735,720.5 734,720.5 734,719 733,719 733,719.5 732,719.5 732,721 731,721 731,719 730,719 730,719.5 729,719.5 729,720 728,720 728,720.5 727,720.5 727,719.5 726,719.5 726,720.5 724,720.5 724,719 723,719 723,719.5 722,719.5 722,719 721,719 721,719.5 720,719.5 720,721 719,721 719,720.5 718,720.5 718,719.5 717,719.5 717,719 716,719 716,720.5 715,720.5 715,720 714,720 714,719 713,719 713,719.5 711,719.5 711,720 710,720 710,719.5 709,719.5 709,720.5 708,720.5 708,719 706,719 706,719.5 704,719.5 704,720.5 703,720.5 703,720 702,720 702,719.5 701,719.5 701,719 699,719 699,720.5 698,720.5 698,721 697,721 697,719 696,719ZM768,561 769,561 769,560 770,560 770,560.5 774,560.5 774,559 775,559 775,561 776,561 776,559.5 777,559.5 777,561 778,561 778,560.5 780,560.5 780,561 781,561 781,560.5 782,560.5 782,561 783,561 783,560 784,560 784,560.5 785,560.5 785,560 786,560 786,559.5 787,559.5 787,561 788,561 788,560.5 789,560.5 789,561 790,561 790,559 791,559 791,561 792,561 792,559.5 793,559.5 793,561 794,561 794,560.5 796,560.5 796,561 797,561 797,560 798,560 798,559.5 799,559.5 799,560.5 800,560.5 800,560 801,560 801,560.5 803,560.5 803,561 804,561 804,559.5 805,559.5 805,560.5 806,560.5 806,561 807,561 807,560 808,560 808,559.5 809,559.5 809,561 810,561 810,556.5 812,556.5 812,561 813,561 813,560.5 814,560.5 814,560 815,560 815,560.5 816,560.5 816,560 817,560 817,561 819,561 819,560.5 820,560.5 820,559 822,559 822,560.5 823,560.5 823,561 826,561 826,557 827,557 827,556.5 828,556.5 828,561 829,561 829,560.5 831,560.5 831,559.5 833,559.5 833,560.5 834,560.5 834,561 836,561 836,560.5 837,560.5 837,559.5 838,559.5 838,561 839,561 839,560.5 840,560.5 840,640.5 836,640.5 836,641 835,641 835,640.5 834,640.5 834,641 833,641 833,640.5 831,640.5 831,641 826,641 826,641.5 825,641.5 825,641 820,641 820,641.5 818,641.5 818,641 813,641 813,641.5 812,641.5 812,641 810,641 810,640.5 809,640.5 809,641 806,641 806,640.5 805,640.5 805,641 804,641 804,640.5 800,640.5 800,641 799,641 799,640.5 798,640.5 798,641.5 796,641.5 796,641 793,641 793,641.5 792,641.5 792,642 791,642 791,641 782,641 782,642 780,642 780,641 775,641 775,640.5 774,640.5 774,642.5 773,642.5 773,640.5 770,640.5 770,641.5 768,641.5ZM840,638.5 842,638.5 842,639.5 843,639.5 843,639 844,639 844,639.5 845,639.5 845,639 846,639 846,638.5 848,638.5 848,639.5 849,639.5 849,639 851,639 851,639.5 856,639.5 856,639 857,639 857,639.5 859,639.5 859,639 860,639 860,639.5 861,639.5 861,639 864,639 864,638.5 865,638.5 865,639.5 866,639.5 866,639 869,639 869,638.5 870,638.5 870,638 871,638 871,639 877,639 877,638.5 878,638.5 878,639 880,639 880,638.5 882,638.5 882,639 886,639 886,639.5 889,639.5 889,638 891,638 891,639.5 894,639.5 894,639 896,639 896,639.5 898,639.5 898,639 900,639 900,639.5 901,639.5 901,639 904,639 904,638.5 906,638.5 906,639 911,639 911,638.5 912,638.5 912,719 911,719 911,720.5 910,720.5 910,720 909,720 909,720.5 908,720.5 908,719 907,719 907,719.5 906,719.5 906,719 905,719 905,719.5 904,719.5 904,720 902,720 902,720.5 901,720.5 901,719.5 900,719.5 900,720 899,720 899,720.5 897,720.5 897,719 896,719 896,720 893,720 893,719.5 892,719.5 892,719 891,719 891,721 890,721 890,719.5 888,719.5 888,719 887,719 887,720 885,720 885,719.5 882,719.5 882,719 881,719 881,720 878,720 878,719 876,719 876,719.5 875,719.5 875,720.5 874,720.5 874,719 873,719 873,719.5 869,719.5 869,720 868,720 868,719.5 867,719.5 867,719 865,719 865,719.5 864,719.5 864,720.5 863,720.5 863,719.5 861,719.5 861,720.5 860,720.5 860,719.5 859,719.5 859,719 857,719 857,720.5 856,720.5 856,719 855,719 855,719.5 853,719.5 853,719 852,719 852,720 850,720 850,719 849,719 849,720.5 847,720.5 847,719.5 844,719.5 844,721 843,721 843,719 842,719 842,719.5 840,719.5ZM912,561 913,561 913,560 914,560 914,559.5 915,559.5 915,561 916,561 916,560 919,560 919,561 921,561 921,560.5 922,560.5 922,560 923,560 923,561 925,561 925,559 927,559 927,561 928,561 928,560.5 929,560.5 929,561 931,561 931,560 933,560 933,560.5 934,560.5 934,561 935,561 935,560 937,560 937,561 939,561 939,559 940,559 940,559.5 941,559.5 941,560 942,560 942,561 944,561 944,560.5 945,560.5 945,561 946,561 946,559.5 948,559.5 948,560.5 952,560.5 952,560 955,560 955,561 957,561 957,560 958,560 958,560.5 959,560.5 959,560 960,560 960,561 961,561 961,559.5 962,559.5 962,560 964,560 964,560.5 965,560.5 965,561 967,561 967,560.5 968,560.5 968,559 969,559 969,559.5 970,559.5 970,560 971,560 971,561 972,561 972,560.5 974,560.5 974,559.5 975,559.5 975,561 976,561 976,560.5 978,560.5 978,561 979,561 979,559.5 980,559.5 980,561 982,561 982,560.5 983,560.5 983,561 984,561 984,640.5 981,640.5 981,641 980,641 980,640.5 971,640.5 971,641 968,641 968,640.5 966,640.5 966,641 962,641 962,641.5 961,641.5 961,641 958,641 958,641.5 955,641.5 955,641 951,641 951,642 950,642 950,641.5 949,641.5 949,641 948,641 948,640.5 947,640.5 947,641 946,641 946,640.5 945,640.5 945,641 942,641 942,640.5 940,640.5 940,641 939,641 939,640.5 936,640.5 936,641.5 935,641.5 935,641 932,641 932,640.5 931,640.5 931,641 929,641 929,640.5 928,640.5 928,641 927,641 927,641.5 926,641.5 926,641 917,641 917,641.5 915,641.5 915,641 912,641ZM984,638.5 985,638.5 985,639 988,639 988,639.5 989,639.5 989,639 990,639 990,638.5 992,638.5 992,639.5 995,639.5 995,639 996,639 996,639.5 997,639.5 997,639 998,639 998,639.5 1001,639.5 1001,639 1002,639 1002,638.5 1003,638.5 1003,639.5 1006,639.5 1006,639 1007,639 1007,639.5 1008,639.5 1008,639 1018,639 1018,638.5 1019,638.5 1019,639 1026,639 1026,638.5 1028,638.5 1028,639 1030,639 1030,639.5 1033,639.5 1033,638.5 1035,638.5 1035,639.5 1038,639.5 1038,639 1039,639 1039,639.5 1042,639.5 1042,639 1045,639 1045,639.5 1046,639.5 1046,639 1049,639 1049,639.5 1050,639.5 1050,638.5 1051,638.5 1051,639 1056,639 1056,720.5 1054,720.5 1054,719 1053,719 1053,719.5 1050,719.5 1050,720 1049,720 1049,719.5 1048,719.5 1048,719 1047,719 1047,719.5 1046,719.5 1046,720 1044,720 1044,719.5 1043,719.5 1043,720 1040,720 1040,719.5 1039,719.5 1039,719 1038,719 1038,719.5 1037,719.5 1037,720 1036,720 1036,719.5 1035,719.5 1035,719 1034,719 1034,719.5 1032,719.5 1032,720 1030,720 1030,719 1029,719 1029,719.5 1028,719.5 1028,719 1027,719 1027,720.5 1025,720.5 1025,719.5 1023,719.5 1023,720.5 1022,720.5 1022,720 1021,720 1021,720.5 1020,720.5 1020,719.5 1019,719.5 1019,719 1018,719 1018,719.5 1017,719.5 1017,720.5 1016,720.5 1016,719 1015,719 1015,719.5 1014,719.5 1014,719 1013,719 1013,720.5 1012,720.5 1012,719 1011,719 1011,719.5 1010,719.5 1010,719 1009,719 1009,719.5 1008,719.5 1008,723 1007,723 1007,719.5 1006,719.5 1006,722.5 1004,722.5 1004,719.5 1003,719.5 1003,719 1002,719 1002,719.5 1001,719.5 1001,720 1000,720 1000,719 998,719 998,719.5 997,719.5 997,719 996,719 996,720 995,720 995,719.5 994,719.5 994,720 993,720 993,719 991,719 991,721 990,721 990,719.5 989,719.5 989,719 988,719 988,719.5 986,719.5 986,720 985,720 985,719 984,719ZM1056,560.5 1059,560.5 1059,560 1060,560 1060,561 1061,561 1061,559.5 1062,559.5 1062,560.5 1063,560.5 1063,560 1064,560 1064,560.5 1065,560.5 1065,561 1066,561 1066,559.5 1068,559.5 1068,560.5 1072,560.5 1072,559.5 1073,559.5 1073,559 1074,559 1074,560.5 1075,560.5 1075,561 1078,561 1078,559.5 1080,559.5 1080,560.5 1081,560.5 1081,561 1082,561 1082,559.5 1083,559.5 1083,561 1085,561 1085,559.5 1087,559.5 1087,561 1088,561 1088,559.5 1089,559.5 1089,561 1092,561 1092,559.5 1094,559.5 1094,560.5 1095,560.5 1095,561 1096,561 1096,560.5 1097,560.5 1097,559 1098,559 1098,560 1099,560 1099,559.5 1100,559.5 1100,560.5 1101,560.5 1101,560 1103,560 1103,561 1104,561 1104,560 1105,560 1105,561 1106,561 1106,560.5 1107,560.5 1107,561 1108,561 1108,560.5 1109,560.5 1109,559.5 1110,559.5 1110,559 1111,559 1111,560.5 1114,560.5 1114,559.5 1116,559.5 1116,560.5 1117,560.5 1117,559.5 1118,559.5 1118,560 1120,560 1120,561 1121,561 1121,560 1123,560 1123,560.5 1125,560.5 1125,560 1126,560 1126,561 1127,561 1127,560 1128,560 1128,641 1127,641 1127,640.5 1122,640.5 1122,641 1121,641 1121,640.5 1115,640.5 1115,641 1114,641 1114,640.5 1112,640.5 1112,642.5 1111,642.5 1111,643 1110,643 1110,641 1106,641 1106,642 1104,642 1104,641 1091,641 1091,640.5 1090,640.5 1090,641 1089,641 1089,640.5 1087,640.5 1087,641 1086,641 1086,640.5 1085,640.5 1085,641 1084,641 1084,641.5 1083,641.5 1083,641 1082,641 1082,640.5 1081,640.5 1081,641 1080,641 1080,640.5 1079,640.5 1079,641 1076,641 1076,641.5 1074,641.5 1074,641 1069,641 1069,641.5 1067,641.5 1067,641 1062,641 1062,640.5 1060,640.5 1060,641 1059,641 1059,640.5 1056,640.5ZM1128,639.5 1129,639.5 1129,639 1133,639 1133,639.5 1135,639.5 1135,723.5 1134,723.5 1134,719.5 1132,719.5 1132,719 1131,719 1131,720 1130,720 1130,719 1129,719 1129,719.5 1128,719.5Z" fill="#09dfe4"/>
<rect x="39" y="80" width="1098" height="2" fill="#74767e"/>
<rect x="39" y="303" width="1098" height="3" fill="#74767e"/>
<rect x="39" y="527" width="1098" height="3" fill="#74767e"/>
<rect x="39" y="750.75" width="1098" height="1.5" fill="#74767e" shape-rendering="auto"/>
<rect x="39" y="80" width="2" height="673" fill="#74767e"/>
<rect x="1135" y="80" width="2" height="673" fill="#74767e"/>
<path d="M39,191.5 H25.5 V201" fill="none" stroke="#f7c4a0" stroke-width="1"/>
<path d="M21.5,201.5 H29.5 L25.5,205 Z" fill="none" stroke="#f7c4a0" stroke-width="1" shape-rendering="auto"/>
<path d="M39,415.5 H25.5 V425" fill="none" stroke="#cdf27e" stroke-width="1"/>
<path d="M21.5,425.5 H29.5 L25.5,429 Z" fill="none" stroke="#cdf27e" stroke-width="1" shape-rendering="auto"/>
<path d="M39,639.5 H25.5 V649" fill="none" stroke="#8fe8ea" stroke-width="1"/>
<path d="M21.5,649.5 H29.5 L25.5,653 Z" fill="none" stroke="#8fe8ea" stroke-width="1" shape-rendering="auto"/>
</svg>
<div class="pl" style="left:55px;top:82px;color:#f3a877">U1</div><div class="pl" style="left:91px;top:82px;color:#f3a877">83.333 V(20.833 V)</div><div class="pl ol" style="left:55px;top:259px;color:#f3a877">U1</div><div class="pl ol" style="left:93px;top:259px;color:#f3a877">-83.333 V</div><div class="tl" style="left:42px;top:280px">0.0 ms</div><div class="tl" style="left:231px;top:280px">13.0 ms</div><div class="tl" style="left:449px;top:280px">26.0 ms</div><div class="tl" style="left:667px;top:280px">39.0 ms</div><div class="tl" style="left:885px;top:280px">52.0 ms</div><div class="tl" style="right:147px;top:280px">65.0 ms</div>
<div class="pl" style="left:55px;top:306px;color:#b4ee3c">U2</div><div class="pl" style="left:91px;top:306px;color:#b4ee3c">83.333 V(20.833 V)</div><div class="pl ol" style="left:55px;top:483px;color:#b4ee3c">U2</div><div class="pl ol" style="left:93px;top:483px;color:#b4ee3c">-83.333 V</div><div class="tl" style="left:42px;top:504px">0.0 ms</div><div class="tl" style="left:231px;top:504px">13.0 ms</div><div class="tl" style="left:449px;top:504px">26.0 ms</div><div class="tl" style="left:667px;top:504px">39.0 ms</div><div class="tl" style="left:885px;top:504px">52.0 ms</div><div class="tl" style="right:147px;top:504px">65.0 ms</div>
<div class="pl" style="left:55px;top:530px;color:#38d6dc">U3</div><div class="pl" style="left:91px;top:530px;color:#38d6dc">83.333 V(20.833 V)</div><div class="pl ol" style="left:55px;top:707px;color:#38d6dc">U3</div><div class="pl ol" style="left:93px;top:707px;color:#38d6dc">-83.333 V</div><div class="tl" style="left:42px;top:728px">0.0 ms</div><div class="tl" style="left:231px;top:728px">13.0 ms</div><div class="tl" style="left:449px;top:728px">26.0 ms</div><div class="tl" style="left:667px;top:728px">39.0 ms</div><div class="tl" style="left:885px;top:728px">52.0 ms</div><div class="tl" style="right:147px;top:728px">65.0 ms</div>
<!-- right panel -->
<div id="rp">
<div class="rb" style="left:11px;top:9px">COMP</div><div class="rb" style="left:78px;top:9px">EXT</div>
<div class="ub" style="top:48px"></div>
<div class="ut" style="top:40px"><span>单元 1</span></div>
<div class="ul" style="left:8px;width:30px;text-align:center;top:63px;color:#f2c84e">U1</div>
<div class="ul" style="right:29px;top:63px;color:#f2c84e">100 Vrms</div>
<div class="ul" style="left:8px;width:30px;text-align:center;top:82px;color:#f2c84e">I1</div>
<div class="ul" style="right:29px;top:82px;color:#f2c84e">30 Arms</div>
<div class="ub" style="top:124px"></div>
<div class="ut" style="top:116px"><span>单元 2</span></div>
<div class="ul" style="left:8px;width:30px;text-align:center;top:139px;color:#a9e264">U2</div>
<div class="ul" style="right:29px;top:139px;color:#a9e264">100 Vrms</div>
<div class="ul" style="left:8px;width:30px;text-align:center;top:158px;color:#a9e264">I2</div>
<div class="ul" style="right:29px;top:158px;color:#a9e264">30 Arms</div>
<div class="ub" style="top:200px"></div>
<div class="ut" style="top:192px"><span>单元 3</span></div>
<div class="ul" style="left:8px;width:30px;text-align:center;top:215px;color:#ee8fb0">U3</div>
<div class="ul" style="right:29px;top:215px;color:#ee8fb0">100 Vrms</div>
<div class="ul" style="left:8px;width:30px;text-align:center;top:234px;color:#ee8fb0">I3</div>
<div class="ul" style="right:29px;top:234px;color:#ee8fb0">30 Arms</div>
<div class="ub" style="top:276px"></div>
<div class="ut" style="top:268px"><span>单元 4</span></div>
<div class="ul" style="left:8px;width:30px;text-align:center;top:291px;color:#5fdcae">U4</div>
<div class="ul" style="right:29px;top:291px;color:#5fdcae">1000 Vrms</div>
<div class="ul" style="left:8px;width:30px;text-align:center;top:310px;color:#5fdcae">I4</div>
<div class="ul" style="right:29px;top:310px;color:#5fdcae">30 Arms</div>
<div class="ub" style="top:352px"></div>
<div class="ut" style="top:344px"><span>单元 5</span></div>
<div class="ul" style="left:8px;width:30px;text-align:center;top:367px;color:#7cc4ee">U5</div>
<div class="ul" style="right:29px;top:367px;color:#7cc4ee">1000 Vrms</div>
<div class="ul" style="left:8px;width:30px;text-align:center;top:386px;color:#7cc4ee">I5</div>
<div class="ul" style="right:29px;top:386px;color:#7cc4ee">30 Arms</div>
<div class="ub" style="top:428px"></div>
<div class="ut" style="top:420px"><span>单元 6</span></div>
<div class="ul" style="left:8px;width:30px;text-align:center;top:443px;color:#dba4e6">U6</div>
<div class="ul" style="right:29px;top:443px;color:#dba4e6">1000 Vrms</div>
<div class="ul" style="left:8px;width:30px;text-align:center;top:462px;color:#dba4e6">I6</div>
<div class="ul" style="right:29px;top:462px;color:#dba4e6">30 Arms</div>
<div class="ub" style="top:504px"></div>
<div class="ut" style="top:496px"><span>单元 7</span></div>
<div class="ul" style="left:8px;width:30px;text-align:center;top:519px;color:#b4dc58">U7</div>
<div class="ul" style="right:29px;top:519px;color:#b4dc58">1000 Vrms</div>
<div class="ul" style="left:8px;width:30px;text-align:center;top:538px;color:#b4dc58">I7</div>
<div class="ul" style="right:29px;top:538px;color:#b4dc58">30 Arms</div>
<div class="ub" style="top:580px;height:63px"></div>
<div class="ut" style="top:573px"><span>积分 : 重置</span></div>
<div class="ul" style="left:4px;width:130px;text-align:center;top:595px;color:#7cc4f2;font-size:14px">时间</div>
<div class="ul" style="left:4px;width:130px;text-align:center;top:611px;color:#b8d8e8;font-size:13px;letter-spacing:0">&#8212;&#8212;&#8201;:&#8201;&#8211;&#8201;:&#8201;&#8211;</div>
</div>
<!-- status bar -->
<div class="st" style="left:2px;width:216px;"><div class="stt" style="left:27px;top:12px;">更新<span class="la">: 114</span></div></div>
<div class="st" style="left:220px;width:660px;"><div class="stt" style="left:5px;top:12px;">更新率<span class="la">: 500ms</span></div><div class="stt" style="left:500px;top:12px;">运行时间<span class="la">: 0:05:23</span></div></div>
<div class="st" style="left:882px;width:256px;">
<svg class="abs" style="left:0;top:0" width="256" height="44" viewBox="0 0 256 44">
<!-- memory icon -->
<rect x="3.5" y="11.5" width="24" height="25" fill="#d8e4f0" stroke="#10141c" stroke-width="1"/>
<rect x="5" y="14" width="21" height="19" fill="#2f8de4"/>
<rect x="5" y="14" width="21" height="3" fill="#63b2f4"/>
<rect x="5" y="34" width="21" height="2" fill="#1d4f86"/>
<path d="M6,11.5V13M9,11.5V13M12,11.5V13M15,11.5V13M18,11.5V13M21,11.5V13M24,11.5V13" stroke="#445" stroke-width="1"/>
<rect x="29" y="11" width="3.5" height="26" fill="#6a6a6a"/>
<rect x="29" y="33" width="3.5" height="4" fill="#7fe060"/>
<text x="33" y="36" font-size="12" fill="#a6ea8c" font-family="Liberation Sans,sans-serif">7%</text>
<!-- usb icon -->
<rect x="64" y="12" width="11" height="6" fill="#d6d6d6"/>
<rect x="66.5" y="13.5" width="2" height="3" fill="#777"/><rect x="70.5" y="13.5" width="2" height="3" fill="#777"/>
<rect x="59" y="17" width="21" height="20" rx="3" fill="#2d66b4"/>
<rect x="59" y="17" width="21" height="20" rx="3" fill="none" stroke="#1b3f78" stroke-width="1"/>
<g stroke="#eef4ff" stroke-width="1.3" fill="none"><path d="M69.5,21V33"/><path d="M69.5,30L65.5,27V24.5"/><path d="M69.5,28.5L73.5,26V24"/></g>
<circle cx="69.5" cy="33.5" r="1.7" fill="#eef4ff"/><path d="M67.8,22.5L69.5,19.5L71.2,22.5Z" fill="#eef4ff"/>
<circle cx="65.5" cy="24" r="1.2" fill="#eef4ff"/><rect x="72.4" y="22.5" width="2.2" height="2.2" fill="#eef4ff"/>
<text x="82" y="36" font-size="12" fill="#a6ea8c" font-family="Liberation Sans,sans-serif">x1</text>
<!-- monitor icon -->
<rect x="104" y="12" width="24" height="17" fill="#d0d0d0"/>
<rect x="106" y="14" width="20" height="13" fill="#4a4a4a"/>
<rect x="104" y="32" width="7" height="3.5" fill="#9a9a9a"/><rect x="121" y="32" width="7" height="3.5" fill="#9a9a9a"/>
<path d="M112,30.5L120,36.5M120,30.5L112,36.5" stroke="#d81c1c" stroke-width="2.2"/>
<!-- gpib icon -->
<rect x="143" y="12" width="14" height="5" fill="#8a8a8a"/>
<rect x="139" y="16" width="24" height="21" rx="2" fill="#4c4c4c"/>
<rect x="139" y="16" width="24" height="5" fill="#5c5c5c"/>
<text x="142" y="34" font-size="11" font-weight="bold" fill="#858585" font-family="Liberation Sans,sans-serif">GP</text>
<circle cx="159" cy="31" r="6" fill="#b41414"/><circle cx="159" cy="31" r="6" fill="none" stroke="#7a0c0c" stroke-width="1"/>
<path d="M156.5,28.5L161.5,33.5M161.5,28.5L156.5,33.5" stroke="#fff" stroke-width="1.3"/>
</svg>
<div class="abs" style="left:170px;top:8px;width:84px;text-align:center;font-size:14px;line-height:16.5px;font-weight:bold;color:#fff;white-space:nowrap;">2016-04-20<br>18:37:32</div>
</div>
<!-- watermark -->
<svg class="abs" style="left:1128px;top:738px" width="152" height="62" viewBox="0 0 152 62">
<circle cx="22" cy="35.4" r="17.8" fill="#dedede"/>
<path d="M9,23 C14,17 22,17 25,13.5 C27.5,11 28.8,9.5 29.4,7.5 C31,11 32.3,15 31.4,19 C30.8,21.5 29,22.5 29.8,24 L20,30 Z" fill="#dedede"/>
<path d="M24.5,24.8 C27,24.6 28.6,23.6 29.6,22 C31,22.3 32,22.4 33.4,21.6" fill="none" stroke="#2b2b2f" stroke-width="1.1"/>
<path d="M12,35.2 L26,24.6" fill="none" stroke="#3a3a3e" stroke-width="1.2"/>
<path d="M32.4,35.2 L15.5,48.6" fill="none" stroke="#3a3a3e" stroke-width="1.2"/>
<path d="M8,46 C10,48.5 12.5,49.2 15.5,48.6" fill="none" stroke="#3a3a3e" stroke-width="1.1"/>
<circle cx="11.8" cy="35.2" r="2.3" fill="#f4f4f4" stroke="#3a3a3e" stroke-width="1.1"/>
<circle cx="32.4" cy="35.2" r="2.3" fill="#f4f4f4" stroke="#3a3a3e" stroke-width="1.1"/>
<text x="45" y="34.2" font-size="17.5" font-weight="900" fill="#dcdcdc" font-family="Noto Serif CJK SC,Noto Sans CJK SC,serif" transform="translate(4.5 0) skewX(-8)" textLength="87.5" lengthAdjust="spacingAndGlyphs">电子发烧友</text>
<text x="45.5" y="49.2" font-size="11" font-weight="bold" fill="#dcdcdc" font-family="Liberation Sans,sans-serif" textLength="97.5" lengthAdjust="spacingAndGlyphs">www.elecfans.com</text>
</svg>
</div>
</body></html>
